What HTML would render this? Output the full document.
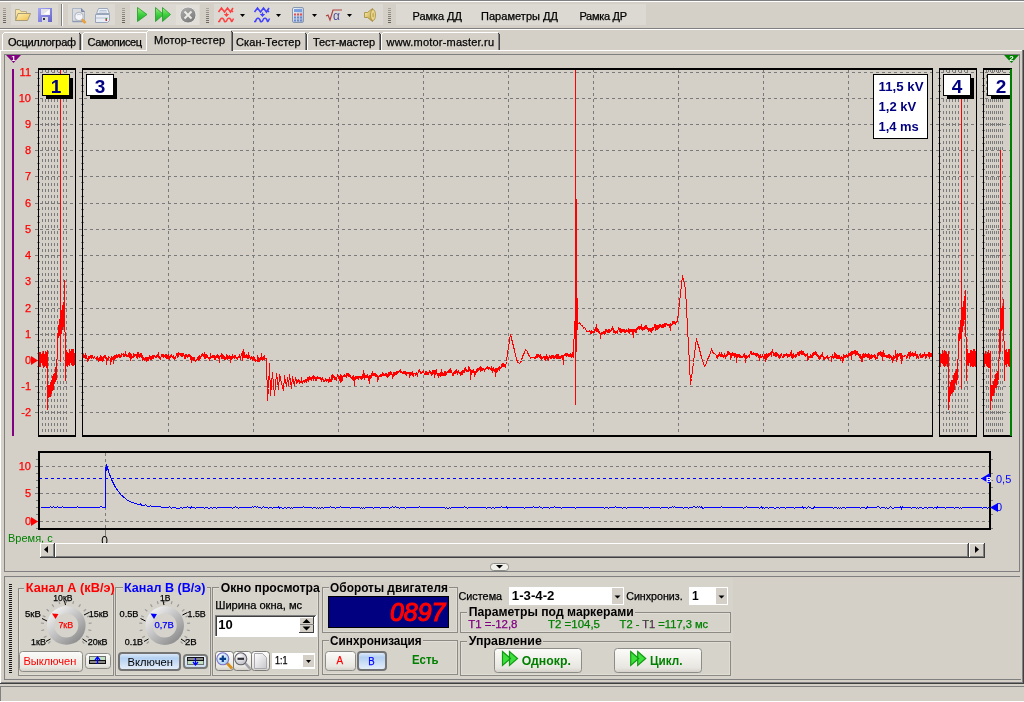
<!DOCTYPE html>
<html><head><meta charset="utf-8"><style>
html,body{margin:0;padding:0;}
body{width:1024px;height:702px;overflow:hidden;position:relative;background:#d4d0c8;font-family:"Liberation Sans", sans-serif;font-size:11px;}
svg{overflow:visible;will-change:transform}
</style></head><body>
<div style="position:absolute;left:0px;top:0px;width:1024px;height:1px;background:#808080;"></div><div style="position:absolute;left:0px;top:1px;width:1024px;height:1px;background:#fff;"></div><div style="position:absolute;left:0px;top:28px;width:1024px;height:1px;background:#808080;"></div><div style="position:absolute;left:0px;top:29px;width:1024px;height:1px;background:#fff;"></div><div style="position:absolute;left:11px;top:4px;width:47px;height:21px;background:#dcd9d2;"></div><div style="position:absolute;left:68px;top:4px;width:47px;height:21px;background:#dcd9d2;"></div><div style="position:absolute;left:130px;top:4px;width:70px;height:21px;background:#dcd9d2;"></div><div style="position:absolute;left:214px;top:4px;width:169px;height:21px;background:#dcd9d2;"></div><div style="position:absolute;left:396px;top:4px;width:250px;height:21px;background:#dcd9d2;"></div><div style="position:absolute;left:3px;top:8px;width:3px;height:1px;background:rgb(168,164,156);"></div><div style="position:absolute;left:3px;top:10px;width:3px;height:1px;background:rgb(158,154,146);"></div><div style="position:absolute;left:3px;top:12px;width:3px;height:1px;background:rgb(149,145,137);"></div><div style="position:absolute;left:3px;top:14px;width:3px;height:1px;background:rgb(140,136,128);"></div><div style="position:absolute;left:3px;top:16px;width:3px;height:1px;background:rgb(131,127,119);"></div><div style="position:absolute;left:3px;top:18px;width:3px;height:1px;background:rgb(122,118,110);"></div><div style="position:absolute;left:3px;top:20px;width:3px;height:1px;background:rgb(113,109,101);"></div><div style="position:absolute;left:3px;top:22px;width:3px;height:1px;background:rgb(104,100,92);"></div><div style="position:absolute;left:122px;top:8px;width:3px;height:1px;background:rgb(168,164,156);"></div><div style="position:absolute;left:122px;top:10px;width:3px;height:1px;background:rgb(158,154,146);"></div><div style="position:absolute;left:122px;top:12px;width:3px;height:1px;background:rgb(149,145,137);"></div><div style="position:absolute;left:122px;top:14px;width:3px;height:1px;background:rgb(140,136,128);"></div><div style="position:absolute;left:122px;top:16px;width:3px;height:1px;background:rgb(131,127,119);"></div><div style="position:absolute;left:122px;top:18px;width:3px;height:1px;background:rgb(122,118,110);"></div><div style="position:absolute;left:122px;top:20px;width:3px;height:1px;background:rgb(113,109,101);"></div><div style="position:absolute;left:122px;top:22px;width:3px;height:1px;background:rgb(104,100,92);"></div><div style="position:absolute;left:206px;top:8px;width:3px;height:1px;background:rgb(168,164,156);"></div><div style="position:absolute;left:206px;top:10px;width:3px;height:1px;background:rgb(158,154,146);"></div><div style="position:absolute;left:206px;top:12px;width:3px;height:1px;background:rgb(149,145,137);"></div><div style="position:absolute;left:206px;top:14px;width:3px;height:1px;background:rgb(140,136,128);"></div><div style="position:absolute;left:206px;top:16px;width:3px;height:1px;background:rgb(131,127,119);"></div><div style="position:absolute;left:206px;top:18px;width:3px;height:1px;background:rgb(122,118,110);"></div><div style="position:absolute;left:206px;top:20px;width:3px;height:1px;background:rgb(113,109,101);"></div><div style="position:absolute;left:206px;top:22px;width:3px;height:1px;background:rgb(104,100,92);"></div><div style="position:absolute;left:388px;top:8px;width:3px;height:1px;background:rgb(168,164,156);"></div><div style="position:absolute;left:388px;top:10px;width:3px;height:1px;background:rgb(158,154,146);"></div><div style="position:absolute;left:388px;top:12px;width:3px;height:1px;background:rgb(149,145,137);"></div><div style="position:absolute;left:388px;top:14px;width:3px;height:1px;background:rgb(140,136,128);"></div><div style="position:absolute;left:388px;top:16px;width:3px;height:1px;background:rgb(131,127,119);"></div><div style="position:absolute;left:388px;top:18px;width:3px;height:1px;background:rgb(122,118,110);"></div><div style="position:absolute;left:388px;top:20px;width:3px;height:1px;background:rgb(113,109,101);"></div><div style="position:absolute;left:388px;top:22px;width:3px;height:1px;background:rgb(104,100,92);"></div><div style="position:absolute;left:61px;top:4px;width:1px;height:22px;background:#808080;"></div><div style="position:absolute;left:62px;top:4px;width:1px;height:22px;background:#fff;"></div><svg style="position:absolute;left:14px;top:8px;" width="18" height="15" viewBox="0 0 18 15">
<defs><linearGradient id="fld" x1="0" y1="0" x2="1" y2="1"><stop offset="0" stop-color="#fff0b0"/><stop offset="1" stop-color="#f0c050"/></linearGradient></defs>
<path d="M1.5 1.5 L5.5 1.5 L7 3.5 L12.5 3.5 L12.5 12.5 L1.5 12.5 Z" fill="#f8e4a0" stroke="#b8ac88"/>
<path d="M4 5.5 L16.5 5.5 L13.5 12.5 L1.5 12.5 Z" fill="url(#fld)" stroke="#a89c78"/>
</svg><svg style="position:absolute;left:38px;top:8px;" width="14" height="14" viewBox="0 0 14 14">
<defs><linearGradient id="flp" x1="0" y1="0" x2="1" y2="1"><stop offset="0" stop-color="#a8a8f8"/><stop offset="1" stop-color="#6464c8"/></linearGradient></defs>
<rect x="0" y="0" width="14" height="14" fill="url(#flp)"/>
<rect x="3" y="1" width="9" height="6" fill="#e4e4e8"/>
<path d="M11.5 1.5 L11.5 6.5 L5 6.5 Z" fill="#ffffff"/>
<rect x="4" y="9" width="6" height="5" fill="#d8d8e0"/>
<rect x="5" y="10" width="2" height="2" fill="#303040"/>
</svg><svg style="position:absolute;left:71px;top:7px;" width="17" height="17" viewBox="0 0 17 17">
<path d="M1.5 1.5 L10.5 1.5 L13.5 4.5 L13.5 14.5 L1.5 14.5 Z" fill="#dcdcdc" stroke="#a8b4c8"/>
<path d="M1.5 14.5 L13.5 14.5" stroke="#8c9ab4" stroke-width="1.5"/>
<path d="M10.5 1.5 L10.5 4.5 L13.5 4.5" fill="#8c9ab8" stroke="#7a88a8"/>
<circle cx="8" cy="9.5" r="4.2" fill="#f4f6fb" stroke="#b8bcc8" stroke-width="1.2"/>
<path d="M6 8 Q8 6.5 10 8" stroke="#c8ccd8" fill="none"/>
<path d="M11 12.5 L14.5 16" stroke="#e8a040" stroke-width="2.6"/>
</svg><svg style="position:absolute;left:94px;top:7px;" width="17" height="17" viewBox="0 0 17 17">
<path d="M4.5 1.5 L13.5 1.5 L15.5 6.5 L2.5 6.5 Z" fill="#eef2f8" stroke="#9aa6ba"/>
<path d="M5.5 3.5 L12.5 3.5 M5 5 L13 5" stroke="#b8c4d8"/>
<path d="M1.5 7.5 L15.5 7.5 L15.5 13.5 L13.5 15.5 L1.5 15.5 Z" fill="#e8ecf4" stroke="#98a4b8"/>
<path d="M2 11 L14 11" stroke="#b0bccc"/>
<rect x="11.5" y="12" width="1.5" height="2" fill="#d03030"/>
<rect x="11.5" y="11" width="1.5" height="1" fill="#30a030"/>
</svg><svg style="position:absolute;left:136px;top:6px;" width="13" height="17" viewBox="0 0 13 17">
<defs><linearGradient id="gpl" x1="0" y1="0" x2="0" y2="1"><stop offset="0" stop-color="#a0f080"/><stop offset="0.5" stop-color="#40d040"/><stop offset="1" stop-color="#20a830"/></linearGradient></defs>
<path d="M1.5 1.5 L11 8.5 L1.5 15.5 Z" fill="url(#gpl)" stroke="#30a030" stroke-width="0.9"/>
</svg><svg style="position:absolute;left:154px;top:6px;" width="19" height="17" viewBox="0 0 19 17">
<path d="M1.5 1.5 L9.5 8.5 L1.5 15.5 Z" fill="url(#gpl)" stroke="#30a030" stroke-width="0.9"/>
<path d="M8.5 1.5 L16.5 8.5 L8.5 15.5 Z" fill="url(#gpl)" stroke="#30a030" stroke-width="0.9"/>
</svg><div style="position:absolute;left:176px;top:5px;width:23px;height:20px;background:#e2dfd9;"></div><svg style="position:absolute;left:179px;top:6px;" width="18" height="18" viewBox="0 0 18 18">
<defs><linearGradient id="stp" x1="0" y1="0" x2="0.6" y2="1"><stop offset="0" stop-color="#b0b0b0"/><stop offset="1" stop-color="#7c7c7c"/></linearGradient></defs>
<circle cx="9" cy="9" r="8" fill="url(#stp)" stroke="#f0f0ee" stroke-width="0.8"/>
<path d="M5.5 5.5 L12.5 12.5 M12.5 5.5 L5.5 12.5" stroke="#ecebe6" stroke-width="2"/>
</svg><svg style="position:absolute;left:217px;top:6px;" width="18" height="17" viewBox="0 0 18 17"><path d="M1.5 6 L4.5 2 L7.5 6 L10.5 2 L13.5 6 L16 2 M16 6 L15 5" fill="none" stroke="#ff4040" stroke-width="1.6"/>
<path d="M9.5 6.5 L9.5 9" stroke="#ff4040" stroke-width="1.3"/><path d="M6.8 8 L12.2 8 L9.5 11 Z" fill="#ff4040"/>
<path d="M1 15.5 L2.5 15.5 Q3.5 12 5 12.3 Q6.5 12 7.5 15.5 Q8.5 16 9.5 15 Q10.5 12 12 12.3 Q13.5 12 14.5 15.5 Q15 16 16.5 12.5" fill="none" stroke="#ff4040" stroke-width="1.5"/></svg><svg style="position:absolute;left:240px;top:14px;" width="5" height="3" viewBox="0 0 5 3"><path d="M0 0 L5 0 L2.5 3 Z" fill="#000"/></svg><svg style="position:absolute;left:253px;top:6px;" width="18" height="17" viewBox="0 0 18 17"><path d="M1.5 6 L4.5 2 L7.5 6 L10.5 2 L13.5 6 L16 2 M16 6 L15 5" fill="none" stroke="#4040ff" stroke-width="1.6"/>
<path d="M9.5 6.5 L9.5 9" stroke="#4040ff" stroke-width="1.3"/><path d="M6.8 8 L12.2 8 L9.5 11 Z" fill="#4040ff"/>
<path d="M1 15.5 L2.5 15.5 Q3.5 12 5 12.3 Q6.5 12 7.5 15.5 Q8.5 16 9.5 15 Q10.5 12 12 12.3 Q13.5 12 14.5 15.5 Q15 16 16.5 12.5" fill="none" stroke="#4040ff" stroke-width="1.5"/></svg><svg style="position:absolute;left:276px;top:14px;" width="5" height="3" viewBox="0 0 5 3"><path d="M0 0 L5 0 L2.5 3 Z" fill="#000"/></svg><svg style="position:absolute;left:292px;top:7px;" width="13" height="17" viewBox="0 0 13 17">
<defs><linearGradient id="clc" x1="0" y1="0" x2="1" y2="1"><stop offset="0" stop-color="#f4f6fa"/><stop offset="1" stop-color="#a8b4c8"/></linearGradient></defs>
<rect x="0.5" y="0.5" width="11" height="15" rx="1.5" fill="url(#clc)" stroke="#8898b0"/>
<rect x="2" y="2" width="8" height="3" fill="#7aa0e0"/>
<g fill="#e05050"><rect x="2" y="6.5" width="2" height="2"/><rect x="5" y="6.5" width="2" height="2"/><rect x="8" y="6.5" width="2" height="2"/></g>
<g fill="#6888d0"><rect x="2" y="9.5" width="2" height="2"/><rect x="5" y="9.5" width="2" height="2"/><rect x="8" y="9.5" width="2" height="2"/>
<rect x="2" y="12.5" width="2" height="2"/><rect x="5" y="12.5" width="2" height="2"/><rect x="8" y="12.5" width="2" height="2"/></g>
</svg><svg style="position:absolute;left:312px;top:14px;" width="5" height="3" viewBox="0 0 5 3"><path d="M0 0 L5 0 L2.5 3 Z" fill="#000"/></svg><svg style="position:absolute;left:325px;top:8px;" width="18" height="14" viewBox="0 0 18 14">
<path d="M1 8 L3 7 L5 12 L8 2 L17 2" fill="none" stroke="#b04040" stroke-width="1.2"/>
<text x="8" y="12" font-family="Liberation Sans" font-size="12" fill="#5050a0">&#945;</text>
</svg><svg style="position:absolute;left:347px;top:14px;" width="5" height="3" viewBox="0 0 5 3"><path d="M0 0 L5 0 L2.5 3 Z" fill="#000"/></svg><svg style="position:absolute;left:363px;top:7px;" width="14" height="16" viewBox="0 0 14 16">
<defs><linearGradient id="spk" x1="0" y1="0" x2="1" y2="1"><stop offset="0" stop-color="#fff4b8"/><stop offset="1" stop-color="#b89830"/></linearGradient></defs>
<path d="M1.5 5.5 L4.5 5.5 L9.5 1.5 L9.5 14.5 L4.5 10.5 L1.5 10.5 Z" fill="url(#spk)" stroke="#a08838" stroke-width="0.8"/>
<ellipse cx="10" cy="8" rx="2.5" ry="5.5" fill="#e8d890" stroke="#a89040" stroke-width="0.8"/>
<ellipse cx="10.2" cy="8" rx="1" ry="2.5" fill="#c8b060"/>
</svg><div style="position:absolute;left:2px;top:32px;width:79px;height:19px;background:#d4d0c8;"></div><div style="position:absolute;left:4px;top:32px;width:75px;height:1px;background:#fff;"></div><div style="position:absolute;left:2px;top:34px;width:1px;height:17px;background:#fff;"></div><div style="position:absolute;left:3px;top:33px;width:1px;height:1px;background:#fff;"></div><div style="position:absolute;left:80px;top:34px;width:1px;height:17px;background:#404040;"></div><div style="position:absolute;left:79px;top:33px;width:1px;height:18px;background:#808080;"></div><div style="position:absolute;left:79px;top:33px;width:1px;height:1px;background:#404040;"></div><div style="position:absolute;left:82px;top:32px;width:65px;height:19px;background:#d4d0c8;"></div><div style="position:absolute;left:84px;top:32px;width:61px;height:1px;background:#fff;"></div><div style="position:absolute;left:82px;top:34px;width:1px;height:17px;background:#fff;"></div><div style="position:absolute;left:83px;top:33px;width:1px;height:1px;background:#fff;"></div><div style="position:absolute;left:145px;top:32px;width:2px;height:1px;background:#fff;"></div><div style="position:absolute;left:232px;top:32px;width:75px;height:19px;background:#d4d0c8;"></div><div style="position:absolute;left:234px;top:32px;width:71px;height:1px;background:#fff;"></div><div style="position:absolute;left:232px;top:32px;width:2px;height:1px;background:#fff;"></div><div style="position:absolute;left:306px;top:34px;width:1px;height:17px;background:#404040;"></div><div style="position:absolute;left:305px;top:33px;width:1px;height:18px;background:#808080;"></div><div style="position:absolute;left:305px;top:33px;width:1px;height:1px;background:#404040;"></div><div style="position:absolute;left:307px;top:32px;width:74px;height:19px;background:#d4d0c8;"></div><div style="position:absolute;left:309px;top:32px;width:70px;height:1px;background:#fff;"></div><div style="position:absolute;left:307px;top:34px;width:1px;height:17px;background:#fff;"></div><div style="position:absolute;left:308px;top:33px;width:1px;height:1px;background:#fff;"></div><div style="position:absolute;left:380px;top:34px;width:1px;height:17px;background:#404040;"></div><div style="position:absolute;left:379px;top:33px;width:1px;height:18px;background:#808080;"></div><div style="position:absolute;left:379px;top:33px;width:1px;height:1px;background:#404040;"></div><div style="position:absolute;left:381px;top:32px;width:119px;height:19px;background:#d4d0c8;"></div><div style="position:absolute;left:383px;top:32px;width:115px;height:1px;background:#fff;"></div><div style="position:absolute;left:381px;top:34px;width:1px;height:17px;background:#fff;"></div><div style="position:absolute;left:382px;top:33px;width:1px;height:1px;background:#fff;"></div><div style="position:absolute;left:499px;top:34px;width:1px;height:17px;background:#404040;"></div><div style="position:absolute;left:498px;top:33px;width:1px;height:18px;background:#808080;"></div><div style="position:absolute;left:498px;top:33px;width:1px;height:1px;background:#404040;"></div><div style="position:absolute;left:0px;top:50px;width:1023px;height:1px;background:#fff;"></div><div style="position:absolute;left:0px;top:50px;width:1px;height:633px;background:#fff;"></div><div style="position:absolute;left:1022px;top:50px;width:1px;height:633px;background:#808080;"></div><div style="position:absolute;left:1023px;top:50px;width:1px;height:634px;background:#404040;"></div><div style="position:absolute;left:1px;top:682px;width:1022px;height:1px;background:#808080;"></div><div style="position:absolute;left:0px;top:683px;width:1024px;height:1px;background:#404040;"></div><div style="position:absolute;left:146px;top:30px;width:87px;height:21px;background:#d4d0c8;"></div><div style="position:absolute;left:148px;top:30px;width:83px;height:1px;background:#fff;"></div><div style="position:absolute;left:146px;top:32px;width:1px;height:19px;background:#fff;"></div><div style="position:absolute;left:147px;top:31px;width:1px;height:1px;background:#fff;"></div><div style="position:absolute;left:232px;top:32px;width:1px;height:19px;background:#404040;"></div><div style="position:absolute;left:231px;top:31px;width:1px;height:20px;background:#808080;"></div><div style="position:absolute;left:231px;top:31px;width:1px;height:1px;background:#404040;"></div><div style="position:absolute;left:147px;top:50px;width:84px;height:1px;background:#d4d0c8;"></div><div style="position:absolute;left:4px;top:54px;width:1016px;height:1px;background:#808080;"></div><div style="position:absolute;left:4px;top:54px;width:1px;height:518px;background:#808080;"></div><div style="position:absolute;left:4px;top:571px;width:1016px;height:1px;background:#808080;"></div><div style="position:absolute;left:1019px;top:54px;width:1px;height:518px;background:#808080;"></div><div style="position:absolute;left:4px;top:576px;width:1016px;height:1px;background:#808080;"></div><div style="position:absolute;left:4px;top:576px;width:1px;height:104px;background:#808080;"></div><div style="position:absolute;left:4px;top:679px;width:1017px;height:1px;background:#808080;"></div><div style="position:absolute;left:0px;top:686px;width:1024px;height:1px;background:#808080;"></div><div style="position:absolute;left:0px;top:686px;width:1px;height:15px;background:#808080;"></div><div style="position:absolute;left:0px;top:701px;width:1024px;height:1px;background:#fff;"></div><svg style="position:absolute;left:0;top:0" width="1024" height="702" viewBox="0 0 1024 702" shape-rendering="crispEdges"><line x1="40" y1="72.5" x2="75" y2="72.5" stroke="#7a7a7a" stroke-dasharray="3 3"/><line x1="35" y1="72.5" x2="38" y2="72.5" stroke="#7a7a7a"/><line x1="40" y1="98.5" x2="75" y2="98.5" stroke="#7a7a7a" stroke-dasharray="3 3"/><line x1="35" y1="98.5" x2="38" y2="98.5" stroke="#7a7a7a"/><line x1="40" y1="124.5" x2="75" y2="124.5" stroke="#7a7a7a" stroke-dasharray="3 3"/><line x1="35" y1="124.5" x2="38" y2="124.5" stroke="#7a7a7a"/><line x1="40" y1="150.5" x2="75" y2="150.5" stroke="#7a7a7a" stroke-dasharray="3 3"/><line x1="35" y1="150.5" x2="38" y2="150.5" stroke="#7a7a7a"/><line x1="40" y1="176.5" x2="75" y2="176.5" stroke="#7a7a7a" stroke-dasharray="3 3"/><line x1="35" y1="176.5" x2="38" y2="176.5" stroke="#7a7a7a"/><line x1="40" y1="203.5" x2="75" y2="203.5" stroke="#7a7a7a" stroke-dasharray="3 3"/><line x1="35" y1="203.5" x2="38" y2="203.5" stroke="#7a7a7a"/><line x1="40" y1="229.5" x2="75" y2="229.5" stroke="#7a7a7a" stroke-dasharray="3 3"/><line x1="35" y1="229.5" x2="38" y2="229.5" stroke="#7a7a7a"/><line x1="40" y1="255.5" x2="75" y2="255.5" stroke="#7a7a7a" stroke-dasharray="3 3"/><line x1="35" y1="255.5" x2="38" y2="255.5" stroke="#7a7a7a"/><line x1="40" y1="281.5" x2="75" y2="281.5" stroke="#7a7a7a" stroke-dasharray="3 3"/><line x1="35" y1="281.5" x2="38" y2="281.5" stroke="#7a7a7a"/><line x1="40" y1="308.5" x2="75" y2="308.5" stroke="#7a7a7a" stroke-dasharray="3 3"/><line x1="35" y1="308.5" x2="38" y2="308.5" stroke="#7a7a7a"/><line x1="40" y1="334.5" x2="75" y2="334.5" stroke="#7a7a7a" stroke-dasharray="3 3"/><line x1="35" y1="334.5" x2="38" y2="334.5" stroke="#7a7a7a"/><line x1="40" y1="360.5" x2="75" y2="360.5" stroke="#7a7a7a" stroke-dasharray="3 3"/><line x1="35" y1="360.5" x2="38" y2="360.5" stroke="#7a7a7a"/><line x1="40" y1="386.5" x2="75" y2="386.5" stroke="#7a7a7a" stroke-dasharray="3 3"/><line x1="35" y1="386.5" x2="38" y2="386.5" stroke="#7a7a7a"/><line x1="40" y1="412.5" x2="75" y2="412.5" stroke="#7a7a7a" stroke-dasharray="3 3"/><line x1="35" y1="412.5" x2="38" y2="412.5" stroke="#7a7a7a"/><line x1="42.5" y1="69" x2="42.5" y2="435" stroke="#7a7a7a" stroke-dasharray="3 3"/><line x1="45.5" y1="69" x2="45.5" y2="435" stroke="#7a7a7a" stroke-dasharray="3 3"/><line x1="48.5" y1="69" x2="48.5" y2="435" stroke="#7a7a7a" stroke-dasharray="3 3"/><line x1="51.5" y1="69" x2="51.5" y2="435" stroke="#7a7a7a" stroke-dasharray="3 3"/><line x1="54.5" y1="69" x2="54.5" y2="435" stroke="#7a7a7a" stroke-dasharray="3 3"/><line x1="57.5" y1="69" x2="57.5" y2="435" stroke="#7a7a7a" stroke-dasharray="3 3"/><line x1="60.5" y1="69" x2="60.5" y2="435" stroke="#7a7a7a" stroke-dasharray="3 3"/><line x1="63.5" y1="69" x2="63.5" y2="435" stroke="#7a7a7a" stroke-dasharray="3 3"/><line x1="66.5" y1="69" x2="66.5" y2="435" stroke="#7a7a7a" stroke-dasharray="3 3"/><line x1="37" y1="78.5" x2="40" y2="78.5" stroke="#7a7a7a"/><line x1="37" y1="85.5" x2="40" y2="85.5" stroke="#7a7a7a"/><line x1="37" y1="91.5" x2="40" y2="91.5" stroke="#7a7a7a"/><line x1="37" y1="104.5" x2="40" y2="104.5" stroke="#7a7a7a"/><line x1="37" y1="111.5" x2="40" y2="111.5" stroke="#7a7a7a"/><line x1="37" y1="117.5" x2="40" y2="117.5" stroke="#7a7a7a"/><line x1="37" y1="130.5" x2="40" y2="130.5" stroke="#7a7a7a"/><line x1="37" y1="137.5" x2="40" y2="137.5" stroke="#7a7a7a"/><line x1="37" y1="143.5" x2="40" y2="143.5" stroke="#7a7a7a"/><line x1="37" y1="156.5" x2="40" y2="156.5" stroke="#7a7a7a"/><line x1="37" y1="163.5" x2="40" y2="163.5" stroke="#7a7a7a"/><line x1="37" y1="169.5" x2="40" y2="169.5" stroke="#7a7a7a"/><line x1="37" y1="182.5" x2="40" y2="182.5" stroke="#7a7a7a"/><line x1="37" y1="189.5" x2="40" y2="189.5" stroke="#7a7a7a"/><line x1="37" y1="196.5" x2="40" y2="196.5" stroke="#7a7a7a"/><line x1="37" y1="209.5" x2="40" y2="209.5" stroke="#7a7a7a"/><line x1="37" y1="216.5" x2="40" y2="216.5" stroke="#7a7a7a"/><line x1="37" y1="222.5" x2="40" y2="222.5" stroke="#7a7a7a"/><line x1="37" y1="235.5" x2="40" y2="235.5" stroke="#7a7a7a"/><line x1="37" y1="242.5" x2="40" y2="242.5" stroke="#7a7a7a"/><line x1="37" y1="248.5" x2="40" y2="248.5" stroke="#7a7a7a"/><line x1="37" y1="261.5" x2="40" y2="261.5" stroke="#7a7a7a"/><line x1="37" y1="268.5" x2="40" y2="268.5" stroke="#7a7a7a"/><line x1="37" y1="274.5" x2="40" y2="274.5" stroke="#7a7a7a"/><line x1="37" y1="287.5" x2="40" y2="287.5" stroke="#7a7a7a"/><line x1="37" y1="294.5" x2="40" y2="294.5" stroke="#7a7a7a"/><line x1="37" y1="301.5" x2="40" y2="301.5" stroke="#7a7a7a"/><line x1="37" y1="314.5" x2="40" y2="314.5" stroke="#7a7a7a"/><line x1="37" y1="321.5" x2="40" y2="321.5" stroke="#7a7a7a"/><line x1="37" y1="327.5" x2="40" y2="327.5" stroke="#7a7a7a"/><line x1="37" y1="340.5" x2="40" y2="340.5" stroke="#7a7a7a"/><line x1="37" y1="347.5" x2="40" y2="347.5" stroke="#7a7a7a"/><line x1="37" y1="353.5" x2="40" y2="353.5" stroke="#7a7a7a"/><line x1="37" y1="366.5" x2="40" y2="366.5" stroke="#7a7a7a"/><line x1="37" y1="373.5" x2="40" y2="373.5" stroke="#7a7a7a"/><line x1="37" y1="379.5" x2="40" y2="379.5" stroke="#7a7a7a"/><line x1="37" y1="392.5" x2="40" y2="392.5" stroke="#7a7a7a"/><line x1="37" y1="399.5" x2="40" y2="399.5" stroke="#7a7a7a"/><line x1="37" y1="405.5" x2="40" y2="405.5" stroke="#7a7a7a"/><line x1="84" y1="72.5" x2="932" y2="72.5" stroke="#7a7a7a" stroke-dasharray="3 3"/><line x1="79" y1="72.5" x2="82" y2="72.5" stroke="#7a7a7a"/><line x1="84" y1="98.5" x2="932" y2="98.5" stroke="#7a7a7a" stroke-dasharray="3 3"/><line x1="79" y1="98.5" x2="82" y2="98.5" stroke="#7a7a7a"/><line x1="84" y1="124.5" x2="932" y2="124.5" stroke="#7a7a7a" stroke-dasharray="3 3"/><line x1="79" y1="124.5" x2="82" y2="124.5" stroke="#7a7a7a"/><line x1="84" y1="150.5" x2="932" y2="150.5" stroke="#7a7a7a" stroke-dasharray="3 3"/><line x1="79" y1="150.5" x2="82" y2="150.5" stroke="#7a7a7a"/><line x1="84" y1="176.5" x2="932" y2="176.5" stroke="#7a7a7a" stroke-dasharray="3 3"/><line x1="79" y1="176.5" x2="82" y2="176.5" stroke="#7a7a7a"/><line x1="84" y1="203.5" x2="932" y2="203.5" stroke="#7a7a7a" stroke-dasharray="3 3"/><line x1="79" y1="203.5" x2="82" y2="203.5" stroke="#7a7a7a"/><line x1="84" y1="229.5" x2="932" y2="229.5" stroke="#7a7a7a" stroke-dasharray="3 3"/><line x1="79" y1="229.5" x2="82" y2="229.5" stroke="#7a7a7a"/><line x1="84" y1="255.5" x2="932" y2="255.5" stroke="#7a7a7a" stroke-dasharray="3 3"/><line x1="79" y1="255.5" x2="82" y2="255.5" stroke="#7a7a7a"/><line x1="84" y1="281.5" x2="932" y2="281.5" stroke="#7a7a7a" stroke-dasharray="3 3"/><line x1="79" y1="281.5" x2="82" y2="281.5" stroke="#7a7a7a"/><line x1="84" y1="308.5" x2="932" y2="308.5" stroke="#7a7a7a" stroke-dasharray="3 3"/><line x1="79" y1="308.5" x2="82" y2="308.5" stroke="#7a7a7a"/><line x1="84" y1="334.5" x2="932" y2="334.5" stroke="#7a7a7a" stroke-dasharray="3 3"/><line x1="79" y1="334.5" x2="82" y2="334.5" stroke="#7a7a7a"/><line x1="84" y1="360.5" x2="932" y2="360.5" stroke="#7a7a7a" stroke-dasharray="3 3"/><line x1="79" y1="360.5" x2="82" y2="360.5" stroke="#7a7a7a"/><line x1="84" y1="386.5" x2="932" y2="386.5" stroke="#7a7a7a" stroke-dasharray="3 3"/><line x1="79" y1="386.5" x2="82" y2="386.5" stroke="#7a7a7a"/><line x1="84" y1="412.5" x2="932" y2="412.5" stroke="#7a7a7a" stroke-dasharray="3 3"/><line x1="79" y1="412.5" x2="82" y2="412.5" stroke="#7a7a7a"/><line x1="168.5" y1="69" x2="168.5" y2="435" stroke="#7a7a7a" stroke-dasharray="3 3"/><line x1="253.5" y1="69" x2="253.5" y2="435" stroke="#7a7a7a" stroke-dasharray="3 3"/><line x1="338.5" y1="69" x2="338.5" y2="435" stroke="#7a7a7a" stroke-dasharray="3 3"/><line x1="423.5" y1="69" x2="423.5" y2="435" stroke="#7a7a7a" stroke-dasharray="3 3"/><line x1="508.5" y1="69" x2="508.5" y2="435" stroke="#7a7a7a" stroke-dasharray="3 3"/><line x1="593.5" y1="69" x2="593.5" y2="435" stroke="#7a7a7a" stroke-dasharray="3 3"/><line x1="678.5" y1="69" x2="678.5" y2="435" stroke="#7a7a7a" stroke-dasharray="3 3"/><line x1="763.5" y1="69" x2="763.5" y2="435" stroke="#7a7a7a" stroke-dasharray="3 3"/><line x1="848.5" y1="69" x2="848.5" y2="435" stroke="#7a7a7a" stroke-dasharray="3 3"/><line x1="81" y1="78.5" x2="84" y2="78.5" stroke="#7a7a7a"/><line x1="81" y1="85.5" x2="84" y2="85.5" stroke="#7a7a7a"/><line x1="81" y1="91.5" x2="84" y2="91.5" stroke="#7a7a7a"/><line x1="81" y1="104.5" x2="84" y2="104.5" stroke="#7a7a7a"/><line x1="81" y1="111.5" x2="84" y2="111.5" stroke="#7a7a7a"/><line x1="81" y1="117.5" x2="84" y2="117.5" stroke="#7a7a7a"/><line x1="81" y1="130.5" x2="84" y2="130.5" stroke="#7a7a7a"/><line x1="81" y1="137.5" x2="84" y2="137.5" stroke="#7a7a7a"/><line x1="81" y1="143.5" x2="84" y2="143.5" stroke="#7a7a7a"/><line x1="81" y1="156.5" x2="84" y2="156.5" stroke="#7a7a7a"/><line x1="81" y1="163.5" x2="84" y2="163.5" stroke="#7a7a7a"/><line x1="81" y1="169.5" x2="84" y2="169.5" stroke="#7a7a7a"/><line x1="81" y1="182.5" x2="84" y2="182.5" stroke="#7a7a7a"/><line x1="81" y1="189.5" x2="84" y2="189.5" stroke="#7a7a7a"/><line x1="81" y1="196.5" x2="84" y2="196.5" stroke="#7a7a7a"/><line x1="81" y1="209.5" x2="84" y2="209.5" stroke="#7a7a7a"/><line x1="81" y1="216.5" x2="84" y2="216.5" stroke="#7a7a7a"/><line x1="81" y1="222.5" x2="84" y2="222.5" stroke="#7a7a7a"/><line x1="81" y1="235.5" x2="84" y2="235.5" stroke="#7a7a7a"/><line x1="81" y1="242.5" x2="84" y2="242.5" stroke="#7a7a7a"/><line x1="81" y1="248.5" x2="84" y2="248.5" stroke="#7a7a7a"/><line x1="81" y1="261.5" x2="84" y2="261.5" stroke="#7a7a7a"/><line x1="81" y1="268.5" x2="84" y2="268.5" stroke="#7a7a7a"/><line x1="81" y1="274.5" x2="84" y2="274.5" stroke="#7a7a7a"/><line x1="81" y1="287.5" x2="84" y2="287.5" stroke="#7a7a7a"/><line x1="81" y1="294.5" x2="84" y2="294.5" stroke="#7a7a7a"/><line x1="81" y1="301.5" x2="84" y2="301.5" stroke="#7a7a7a"/><line x1="81" y1="314.5" x2="84" y2="314.5" stroke="#7a7a7a"/><line x1="81" y1="321.5" x2="84" y2="321.5" stroke="#7a7a7a"/><line x1="81" y1="327.5" x2="84" y2="327.5" stroke="#7a7a7a"/><line x1="81" y1="340.5" x2="84" y2="340.5" stroke="#7a7a7a"/><line x1="81" y1="347.5" x2="84" y2="347.5" stroke="#7a7a7a"/><line x1="81" y1="353.5" x2="84" y2="353.5" stroke="#7a7a7a"/><line x1="81" y1="366.5" x2="84" y2="366.5" stroke="#7a7a7a"/><line x1="81" y1="373.5" x2="84" y2="373.5" stroke="#7a7a7a"/><line x1="81" y1="379.5" x2="84" y2="379.5" stroke="#7a7a7a"/><line x1="81" y1="392.5" x2="84" y2="392.5" stroke="#7a7a7a"/><line x1="81" y1="399.5" x2="84" y2="399.5" stroke="#7a7a7a"/><line x1="81" y1="405.5" x2="84" y2="405.5" stroke="#7a7a7a"/><line x1="941" y1="72.5" x2="976" y2="72.5" stroke="#7a7a7a" stroke-dasharray="3 3"/><line x1="936" y1="72.5" x2="939" y2="72.5" stroke="#7a7a7a"/><line x1="941" y1="98.5" x2="976" y2="98.5" stroke="#7a7a7a" stroke-dasharray="3 3"/><line x1="936" y1="98.5" x2="939" y2="98.5" stroke="#7a7a7a"/><line x1="941" y1="124.5" x2="976" y2="124.5" stroke="#7a7a7a" stroke-dasharray="3 3"/><line x1="936" y1="124.5" x2="939" y2="124.5" stroke="#7a7a7a"/><line x1="941" y1="150.5" x2="976" y2="150.5" stroke="#7a7a7a" stroke-dasharray="3 3"/><line x1="936" y1="150.5" x2="939" y2="150.5" stroke="#7a7a7a"/><line x1="941" y1="176.5" x2="976" y2="176.5" stroke="#7a7a7a" stroke-dasharray="3 3"/><line x1="936" y1="176.5" x2="939" y2="176.5" stroke="#7a7a7a"/><line x1="941" y1="203.5" x2="976" y2="203.5" stroke="#7a7a7a" stroke-dasharray="3 3"/><line x1="936" y1="203.5" x2="939" y2="203.5" stroke="#7a7a7a"/><line x1="941" y1="229.5" x2="976" y2="229.5" stroke="#7a7a7a" stroke-dasharray="3 3"/><line x1="936" y1="229.5" x2="939" y2="229.5" stroke="#7a7a7a"/><line x1="941" y1="255.5" x2="976" y2="255.5" stroke="#7a7a7a" stroke-dasharray="3 3"/><line x1="936" y1="255.5" x2="939" y2="255.5" stroke="#7a7a7a"/><line x1="941" y1="281.5" x2="976" y2="281.5" stroke="#7a7a7a" stroke-dasharray="3 3"/><line x1="936" y1="281.5" x2="939" y2="281.5" stroke="#7a7a7a"/><line x1="941" y1="308.5" x2="976" y2="308.5" stroke="#7a7a7a" stroke-dasharray="3 3"/><line x1="936" y1="308.5" x2="939" y2="308.5" stroke="#7a7a7a"/><line x1="941" y1="334.5" x2="976" y2="334.5" stroke="#7a7a7a" stroke-dasharray="3 3"/><line x1="936" y1="334.5" x2="939" y2="334.5" stroke="#7a7a7a"/><line x1="941" y1="360.5" x2="976" y2="360.5" stroke="#7a7a7a" stroke-dasharray="3 3"/><line x1="936" y1="360.5" x2="939" y2="360.5" stroke="#7a7a7a"/><line x1="941" y1="386.5" x2="976" y2="386.5" stroke="#7a7a7a" stroke-dasharray="3 3"/><line x1="936" y1="386.5" x2="939" y2="386.5" stroke="#7a7a7a"/><line x1="941" y1="412.5" x2="976" y2="412.5" stroke="#7a7a7a" stroke-dasharray="3 3"/><line x1="936" y1="412.5" x2="939" y2="412.5" stroke="#7a7a7a"/><line x1="943.5" y1="69" x2="943.5" y2="435" stroke="#7a7a7a" stroke-dasharray="3 3"/><line x1="946.5" y1="69" x2="946.5" y2="435" stroke="#7a7a7a" stroke-dasharray="3 3"/><line x1="949.5" y1="69" x2="949.5" y2="435" stroke="#7a7a7a" stroke-dasharray="3 3"/><line x1="952.5" y1="69" x2="952.5" y2="435" stroke="#7a7a7a" stroke-dasharray="3 3"/><line x1="955.5" y1="69" x2="955.5" y2="435" stroke="#7a7a7a" stroke-dasharray="3 3"/><line x1="958.5" y1="69" x2="958.5" y2="435" stroke="#7a7a7a" stroke-dasharray="3 3"/><line x1="961.5" y1="69" x2="961.5" y2="435" stroke="#7a7a7a" stroke-dasharray="3 3"/><line x1="964.5" y1="69" x2="964.5" y2="435" stroke="#7a7a7a" stroke-dasharray="3 3"/><line x1="967.5" y1="69" x2="967.5" y2="435" stroke="#7a7a7a" stroke-dasharray="3 3"/><line x1="938" y1="78.5" x2="941" y2="78.5" stroke="#7a7a7a"/><line x1="938" y1="85.5" x2="941" y2="85.5" stroke="#7a7a7a"/><line x1="938" y1="91.5" x2="941" y2="91.5" stroke="#7a7a7a"/><line x1="938" y1="104.5" x2="941" y2="104.5" stroke="#7a7a7a"/><line x1="938" y1="111.5" x2="941" y2="111.5" stroke="#7a7a7a"/><line x1="938" y1="117.5" x2="941" y2="117.5" stroke="#7a7a7a"/><line x1="938" y1="130.5" x2="941" y2="130.5" stroke="#7a7a7a"/><line x1="938" y1="137.5" x2="941" y2="137.5" stroke="#7a7a7a"/><line x1="938" y1="143.5" x2="941" y2="143.5" stroke="#7a7a7a"/><line x1="938" y1="156.5" x2="941" y2="156.5" stroke="#7a7a7a"/><line x1="938" y1="163.5" x2="941" y2="163.5" stroke="#7a7a7a"/><line x1="938" y1="169.5" x2="941" y2="169.5" stroke="#7a7a7a"/><line x1="938" y1="182.5" x2="941" y2="182.5" stroke="#7a7a7a"/><line x1="938" y1="189.5" x2="941" y2="189.5" stroke="#7a7a7a"/><line x1="938" y1="196.5" x2="941" y2="196.5" stroke="#7a7a7a"/><line x1="938" y1="209.5" x2="941" y2="209.5" stroke="#7a7a7a"/><line x1="938" y1="216.5" x2="941" y2="216.5" stroke="#7a7a7a"/><line x1="938" y1="222.5" x2="941" y2="222.5" stroke="#7a7a7a"/><line x1="938" y1="235.5" x2="941" y2="235.5" stroke="#7a7a7a"/><line x1="938" y1="242.5" x2="941" y2="242.5" stroke="#7a7a7a"/><line x1="938" y1="248.5" x2="941" y2="248.5" stroke="#7a7a7a"/><line x1="938" y1="261.5" x2="941" y2="261.5" stroke="#7a7a7a"/><line x1="938" y1="268.5" x2="941" y2="268.5" stroke="#7a7a7a"/><line x1="938" y1="274.5" x2="941" y2="274.5" stroke="#7a7a7a"/><line x1="938" y1="287.5" x2="941" y2="287.5" stroke="#7a7a7a"/><line x1="938" y1="294.5" x2="941" y2="294.5" stroke="#7a7a7a"/><line x1="938" y1="301.5" x2="941" y2="301.5" stroke="#7a7a7a"/><line x1="938" y1="314.5" x2="941" y2="314.5" stroke="#7a7a7a"/><line x1="938" y1="321.5" x2="941" y2="321.5" stroke="#7a7a7a"/><line x1="938" y1="327.5" x2="941" y2="327.5" stroke="#7a7a7a"/><line x1="938" y1="340.5" x2="941" y2="340.5" stroke="#7a7a7a"/><line x1="938" y1="347.5" x2="941" y2="347.5" stroke="#7a7a7a"/><line x1="938" y1="353.5" x2="941" y2="353.5" stroke="#7a7a7a"/><line x1="938" y1="366.5" x2="941" y2="366.5" stroke="#7a7a7a"/><line x1="938" y1="373.5" x2="941" y2="373.5" stroke="#7a7a7a"/><line x1="938" y1="379.5" x2="941" y2="379.5" stroke="#7a7a7a"/><line x1="938" y1="392.5" x2="941" y2="392.5" stroke="#7a7a7a"/><line x1="938" y1="399.5" x2="941" y2="399.5" stroke="#7a7a7a"/><line x1="938" y1="405.5" x2="941" y2="405.5" stroke="#7a7a7a"/><line x1="985" y1="72.5" x2="1011" y2="72.5" stroke="#7a7a7a" stroke-dasharray="3 3"/><line x1="980" y1="72.5" x2="983" y2="72.5" stroke="#7a7a7a"/><line x1="985" y1="98.5" x2="1011" y2="98.5" stroke="#7a7a7a" stroke-dasharray="3 3"/><line x1="980" y1="98.5" x2="983" y2="98.5" stroke="#7a7a7a"/><line x1="985" y1="124.5" x2="1011" y2="124.5" stroke="#7a7a7a" stroke-dasharray="3 3"/><line x1="980" y1="124.5" x2="983" y2="124.5" stroke="#7a7a7a"/><line x1="985" y1="150.5" x2="1011" y2="150.5" stroke="#7a7a7a" stroke-dasharray="3 3"/><line x1="980" y1="150.5" x2="983" y2="150.5" stroke="#7a7a7a"/><line x1="985" y1="176.5" x2="1011" y2="176.5" stroke="#7a7a7a" stroke-dasharray="3 3"/><line x1="980" y1="176.5" x2="983" y2="176.5" stroke="#7a7a7a"/><line x1="985" y1="203.5" x2="1011" y2="203.5" stroke="#7a7a7a" stroke-dasharray="3 3"/><line x1="980" y1="203.5" x2="983" y2="203.5" stroke="#7a7a7a"/><line x1="985" y1="229.5" x2="1011" y2="229.5" stroke="#7a7a7a" stroke-dasharray="3 3"/><line x1="980" y1="229.5" x2="983" y2="229.5" stroke="#7a7a7a"/><line x1="985" y1="255.5" x2="1011" y2="255.5" stroke="#7a7a7a" stroke-dasharray="3 3"/><line x1="980" y1="255.5" x2="983" y2="255.5" stroke="#7a7a7a"/><line x1="985" y1="281.5" x2="1011" y2="281.5" stroke="#7a7a7a" stroke-dasharray="3 3"/><line x1="980" y1="281.5" x2="983" y2="281.5" stroke="#7a7a7a"/><line x1="985" y1="308.5" x2="1011" y2="308.5" stroke="#7a7a7a" stroke-dasharray="3 3"/><line x1="980" y1="308.5" x2="983" y2="308.5" stroke="#7a7a7a"/><line x1="985" y1="334.5" x2="1011" y2="334.5" stroke="#7a7a7a" stroke-dasharray="3 3"/><line x1="980" y1="334.5" x2="983" y2="334.5" stroke="#7a7a7a"/><line x1="985" y1="360.5" x2="1011" y2="360.5" stroke="#7a7a7a" stroke-dasharray="3 3"/><line x1="980" y1="360.5" x2="983" y2="360.5" stroke="#7a7a7a"/><line x1="985" y1="386.5" x2="1011" y2="386.5" stroke="#7a7a7a" stroke-dasharray="3 3"/><line x1="980" y1="386.5" x2="983" y2="386.5" stroke="#7a7a7a"/><line x1="985" y1="412.5" x2="1011" y2="412.5" stroke="#7a7a7a" stroke-dasharray="3 3"/><line x1="980" y1="412.5" x2="983" y2="412.5" stroke="#7a7a7a"/><line x1="986.5" y1="69" x2="986.5" y2="435" stroke="#7a7a7a" stroke-dasharray="3 3"/><line x1="988.5" y1="69" x2="988.5" y2="435" stroke="#7a7a7a" stroke-dasharray="3 3"/><line x1="990.5" y1="69" x2="990.5" y2="435" stroke="#7a7a7a" stroke-dasharray="3 3"/><line x1="992.5" y1="69" x2="992.5" y2="435" stroke="#7a7a7a" stroke-dasharray="3 3"/><line x1="994.5" y1="69" x2="994.5" y2="435" stroke="#7a7a7a" stroke-dasharray="3 3"/><line x1="996.5" y1="69" x2="996.5" y2="435" stroke="#7a7a7a" stroke-dasharray="3 3"/><line x1="998.5" y1="69" x2="998.5" y2="435" stroke="#7a7a7a" stroke-dasharray="3 3"/><line x1="1000.5" y1="69" x2="1000.5" y2="435" stroke="#7a7a7a" stroke-dasharray="3 3"/><line x1="1002.5" y1="69" x2="1002.5" y2="435" stroke="#7a7a7a" stroke-dasharray="3 3"/><line x1="982" y1="78.5" x2="985" y2="78.5" stroke="#7a7a7a"/><line x1="982" y1="85.5" x2="985" y2="85.5" stroke="#7a7a7a"/><line x1="982" y1="91.5" x2="985" y2="91.5" stroke="#7a7a7a"/><line x1="982" y1="104.5" x2="985" y2="104.5" stroke="#7a7a7a"/><line x1="982" y1="111.5" x2="985" y2="111.5" stroke="#7a7a7a"/><line x1="982" y1="117.5" x2="985" y2="117.5" stroke="#7a7a7a"/><line x1="982" y1="130.5" x2="985" y2="130.5" stroke="#7a7a7a"/><line x1="982" y1="137.5" x2="985" y2="137.5" stroke="#7a7a7a"/><line x1="982" y1="143.5" x2="985" y2="143.5" stroke="#7a7a7a"/><line x1="982" y1="156.5" x2="985" y2="156.5" stroke="#7a7a7a"/><line x1="982" y1="163.5" x2="985" y2="163.5" stroke="#7a7a7a"/><line x1="982" y1="169.5" x2="985" y2="169.5" stroke="#7a7a7a"/><line x1="982" y1="182.5" x2="985" y2="182.5" stroke="#7a7a7a"/><line x1="982" y1="189.5" x2="985" y2="189.5" stroke="#7a7a7a"/><line x1="982" y1="196.5" x2="985" y2="196.5" stroke="#7a7a7a"/><line x1="982" y1="209.5" x2="985" y2="209.5" stroke="#7a7a7a"/><line x1="982" y1="216.5" x2="985" y2="216.5" stroke="#7a7a7a"/><line x1="982" y1="222.5" x2="985" y2="222.5" stroke="#7a7a7a"/><line x1="982" y1="235.5" x2="985" y2="235.5" stroke="#7a7a7a"/><line x1="982" y1="242.5" x2="985" y2="242.5" stroke="#7a7a7a"/><line x1="982" y1="248.5" x2="985" y2="248.5" stroke="#7a7a7a"/><line x1="982" y1="261.5" x2="985" y2="261.5" stroke="#7a7a7a"/><line x1="982" y1="268.5" x2="985" y2="268.5" stroke="#7a7a7a"/><line x1="982" y1="274.5" x2="985" y2="274.5" stroke="#7a7a7a"/><line x1="982" y1="287.5" x2="985" y2="287.5" stroke="#7a7a7a"/><line x1="982" y1="294.5" x2="985" y2="294.5" stroke="#7a7a7a"/><line x1="982" y1="301.5" x2="985" y2="301.5" stroke="#7a7a7a"/><line x1="982" y1="314.5" x2="985" y2="314.5" stroke="#7a7a7a"/><line x1="982" y1="321.5" x2="985" y2="321.5" stroke="#7a7a7a"/><line x1="982" y1="327.5" x2="985" y2="327.5" stroke="#7a7a7a"/><line x1="982" y1="340.5" x2="985" y2="340.5" stroke="#7a7a7a"/><line x1="982" y1="347.5" x2="985" y2="347.5" stroke="#7a7a7a"/><line x1="982" y1="353.5" x2="985" y2="353.5" stroke="#7a7a7a"/><line x1="982" y1="366.5" x2="985" y2="366.5" stroke="#7a7a7a"/><line x1="982" y1="373.5" x2="985" y2="373.5" stroke="#7a7a7a"/><line x1="982" y1="379.5" x2="985" y2="379.5" stroke="#7a7a7a"/><line x1="982" y1="392.5" x2="985" y2="392.5" stroke="#7a7a7a"/><line x1="982" y1="399.5" x2="985" y2="399.5" stroke="#7a7a7a"/><line x1="982" y1="405.5" x2="985" y2="405.5" stroke="#7a7a7a"/><polyline points="83.5,357.5 83.5,354.5 84.5,357.5 84.5,355.5 85.5,358.5 85.5,353.5 86.5,356.5 86.5,358.5 87.5,358.5 87.5,361.5 88.5,359.5 88.5,356.5 89.5,358.5 89.5,356.5 90.5,355.5 90.5,357.5 91.5,355.5 91.5,358.5 92.5,355.5 92.5,357.5 93.5,358.5 93.5,357.5 94.5,356.5 94.5,357.5 95.5,358.5 95.5,358.5 96.5,357.5 96.5,359.5 97.5,356.5 97.5,358.5 98.5,361.5 98.5,358.5 99.5,360.5 99.5,357.5 100.5,360.5 100.5,355.5 101.5,360.5 101.5,356.5 102.5,358.5 102.5,361.5 103.5,359.5 103.5,356.5 104.5,357.5 104.5,355.5 105.5,355.5 105.5,358.5 106.5,357.5 106.5,364.5 107.5,358.5 107.5,360.5 108.5,359.5 108.5,356.5 109.5,357.5 109.5,357.5 110.5,358.5 110.5,364.5 111.5,359.5 111.5,356.5 112.5,358.5 112.5,358.5 113.5,356.5 113.5,363.5 114.5,356.5 114.5,355.5 115.5,355.5 115.5,358.5 116.5,354.5 116.5,357.5 117.5,357.5 117.5,355.5 118.5,356.5 118.5,354.5 119.5,354.5 119.5,357.5 120.5,355.5 120.5,357.5 121.5,356.5 121.5,353.5 122.5,354.5 122.5,354.5 123.5,353.5 123.5,356.5 124.5,354.5 124.5,356.5 125.5,354.5 125.5,351.5 126.5,356.5 126.5,354.5 127.5,355.5 127.5,356.5 128.5,356.5 128.5,354.5 129.5,352.5 129.5,355.5 130.5,360.5 130.5,353.5 131.5,358.5 131.5,354.5 132.5,357.5 132.5,356.5 133.5,357.5 133.5,353.5 134.5,355.5 134.5,356.5 135.5,355.5 135.5,354.5 136.5,354.5 136.5,357.5 137.5,352.5 137.5,358.5 138.5,355.5 138.5,352.5 139.5,355.5 139.5,357.5 140.5,356.5 140.5,353.5 141.5,357.5 141.5,353.5 142.5,356.5 142.5,360.5 143.5,357.5 143.5,359.5 144.5,358.5 144.5,360.5 145.5,358.5 145.5,357.5 146.5,357.5 146.5,361.5 147.5,359.5 147.5,357.5 148.5,360.5 148.5,357.5 149.5,358.5 149.5,355.5 150.5,357.5 150.5,359.5 151.5,359.5 151.5,357.5 152.5,355.5 152.5,358.5 153.5,358.5 153.5,355.5 154.5,355.5 154.5,356.5 155.5,357.5 155.5,356.5 156.5,355.5 156.5,357.5 157.5,356.5 157.5,355.5 158.5,352.5 158.5,357.5 159.5,358.5 159.5,356.5 160.5,359.5 160.5,357.5 161.5,356.5 161.5,354.5 162.5,354.5 162.5,356.5 163.5,354.5 163.5,357.5 164.5,356.5 164.5,355.5 165.5,354.5 165.5,356.5 166.5,358.5 166.5,354.5 167.5,356.5 167.5,358.5 168.5,358.5 168.5,354.5 169.5,359.5 169.5,356.5 170.5,357.5 170.5,356.5 171.5,354.5 171.5,356.5 172.5,357.5 172.5,356.5 173.5,355.5 173.5,357.5 174.5,359.5 174.5,357.5 175.5,358.5 175.5,356.5 176.5,355.5 176.5,353.5 177.5,357.5 177.5,354.5 178.5,352.5 178.5,356.5 179.5,353.5 179.5,354.5 180.5,355.5 180.5,353.5 181.5,353.5 181.5,356.5 182.5,356.5 182.5,353.5 183.5,353.5 183.5,355.5 184.5,355.5 184.5,358.5 185.5,358.5 185.5,354.5 186.5,356.5 186.5,354.5 187.5,356.5 187.5,357.5 188.5,356.5 188.5,354.5 189.5,356.5 189.5,354.5 190.5,355.5 190.5,357.5 191.5,362.5 191.5,356.5 192.5,359.5 192.5,357.5 193.5,357.5 193.5,360.5 194.5,357.5 194.5,360.5 195.5,360.5 195.5,361.5 196.5,359.5 196.5,360.5 197.5,357.5 197.5,359.5 198.5,360.5 198.5,356.5 199.5,359.5 199.5,355.5 200.5,358.5 200.5,356.5 201.5,356.5 201.5,355.5 202.5,353.5 202.5,355.5 203.5,355.5 203.5,356.5 204.5,352.5 204.5,358.5 205.5,354.5 205.5,358.5 206.5,357.5 206.5,354.5 207.5,357.5 207.5,355.5 208.5,358.5 208.5,357.5 209.5,358.5 209.5,360.5 210.5,353.5 210.5,358.5 211.5,356.5 211.5,357.5 212.5,355.5 212.5,357.5 213.5,357.5 213.5,355.5 214.5,355.5 214.5,359.5 215.5,359.5 215.5,356.5 216.5,355.5 216.5,357.5 217.5,357.5 217.5,354.5 218.5,357.5 218.5,355.5 219.5,362.5 219.5,356.5 220.5,356.5 220.5,355.5 221.5,358.5 221.5,353.5 222.5,354.5 222.5,358.5 223.5,355.5 223.5,357.5 224.5,359.5 224.5,356.5 225.5,359.5 225.5,357.5 226.5,358.5 226.5,354.5 227.5,356.5 227.5,359.5 228.5,358.5 228.5,356.5 229.5,357.5 229.5,355.5 230.5,362.5 230.5,356.5 231.5,356.5 231.5,359.5 232.5,358.5 232.5,354.5 233.5,357.5 233.5,356.5 234.5,355.5 234.5,358.5 235.5,357.5 235.5,355.5 236.5,358.5 236.5,358.5 237.5,359.5 237.5,357.5 238.5,356.5 238.5,357.5 239.5,354.5 239.5,356.5 240.5,359.5 240.5,356.5 241.5,355.5 241.5,354.5 242.5,351.5 242.5,360.5 243.5,355.5 243.5,349.5 244.5,355.5 244.5,357.5 245.5,357.5 245.5,356.5 246.5,354.5 246.5,357.5 247.5,358.5 247.5,355.5 248.5,358.5 248.5,352.5 249.5,357.5 249.5,355.5 250.5,359.5 250.5,357.5 251.5,356.5 251.5,358.5 252.5,357.5 252.5,360.5 253.5,359.5 253.5,356.5 254.5,357.5 254.5,359.5 255.5,361.5 255.5,359.5 256.5,360.5 256.5,360.5 257.5,361.5 257.5,355.5 258.5,358.5 258.5,361.5 259.5,361.5 259.5,358.5 260.5,357.5 260.5,359.5 261.5,359.5 261.5,353.5 262.5,360.5 262.5,358.5 263.5,359.5 263.5,357.5 264.5,355.5 264.5,359.5 265.5,358.5 265.5,358.5 266.5,358.5 267.5,400.5 268.5,388.5 269.5,363.5 270.5,395.5 271.5,384.5 272.5,372.5 273.5,384.5 274.5,395.5 275.5,384.5 276.5,373.5 277.5,380.5 278.5,389.5 279.5,375.5 280.5,377.5 281.5,383.5 282.5,386.5 283.5,390.5 284.5,375.5 285.5,381.5 286.5,386.5 287.5,377.5 288.5,385.5 289.5,374.5 290.5,380.5 291.5,388.5 292.5,376.5 293.5,381.5 294.5,385.5 295.5,377.5 296.5,380.5 296.5,383.5 297.5,382.5 297.5,380.5 298.5,381.5 298.5,379.5 299.5,381.5 299.5,383.5 300.5,382.5 300.5,381.5 301.5,382.5 301.5,377.5 302.5,383.5 302.5,381.5 303.5,380.5 303.5,381.5 304.5,380.5 304.5,382.5 305.5,379.5 305.5,381.5 306.5,382.5 306.5,379.5 307.5,380.5 307.5,377.5 308.5,381.5 308.5,377.5 309.5,379.5 309.5,376.5 310.5,377.5 310.5,379.5 311.5,377.5 311.5,380.5 312.5,376.5 312.5,377.5 313.5,375.5 313.5,380.5 314.5,377.5 314.5,376.5 315.5,377.5 315.5,380.5 316.5,377.5 316.5,380.5 317.5,376.5 317.5,378.5 318.5,378.5 318.5,377.5 319.5,377.5 319.5,378.5 320.5,379.5 320.5,377.5 321.5,381.5 321.5,378.5 322.5,377.5 322.5,379.5 323.5,379.5 323.5,381.5 324.5,381.5 324.5,380.5 325.5,380.5 325.5,378.5 326.5,380.5 326.5,381.5 327.5,380.5 327.5,379.5 328.5,382.5 328.5,380.5 329.5,377.5 329.5,381.5 330.5,379.5 330.5,381.5 331.5,381.5 331.5,376.5 332.5,374.5 332.5,379.5 333.5,375.5 333.5,377.5 334.5,376.5 334.5,379.5 335.5,379.5 335.5,377.5 336.5,380.5 336.5,377.5 337.5,376.5 337.5,374.5 338.5,378.5 338.5,375.5 339.5,376.5 339.5,378.5 340.5,382.5 340.5,374.5 341.5,375.5 341.5,381.5 342.5,379.5 342.5,377.5 343.5,375.5 343.5,376.5 344.5,374.5 344.5,376.5 345.5,375.5 345.5,376.5 346.5,373.5 346.5,377.5 347.5,373.5 347.5,375.5 348.5,373.5 348.5,376.5 349.5,374.5 349.5,376.5 350.5,375.5 350.5,376.5 351.5,378.5 351.5,377.5 352.5,376.5 352.5,379.5 353.5,376.5 353.5,375.5 354.5,385.5 354.5,377.5 355.5,379.5 355.5,376.5 356.5,378.5 356.5,376.5 357.5,376.5 357.5,378.5 358.5,376.5 358.5,379.5 359.5,376.5 359.5,377.5 360.5,378.5 360.5,376.5 361.5,376.5 361.5,379.5 362.5,374.5 362.5,378.5 363.5,376.5 363.5,370.5 364.5,375.5 364.5,379.5 365.5,375.5 365.5,377.5 366.5,377.5 366.5,375.5 367.5,374.5 367.5,377.5 368.5,376.5 368.5,377.5 369.5,383.5 369.5,375.5 370.5,375.5 370.5,378.5 371.5,376.5 371.5,374.5 372.5,371.5 372.5,375.5 373.5,373.5 373.5,375.5 374.5,373.5 374.5,375.5 375.5,376.5 375.5,373.5 376.5,375.5 376.5,376.5 377.5,375.5 377.5,381.5 378.5,377.5 378.5,376.5 379.5,376.5 379.5,375.5 380.5,376.5 380.5,374.5 381.5,374.5 381.5,376.5 382.5,374.5 382.5,372.5 383.5,375.5 383.5,373.5 384.5,375.5 384.5,374.5 385.5,373.5 385.5,375.5 386.5,376.5 386.5,373.5 387.5,375.5 387.5,377.5 388.5,375.5 388.5,372.5 389.5,372.5 389.5,375.5 390.5,371.5 390.5,374.5 391.5,372.5 391.5,374.5 392.5,374.5 392.5,378.5 393.5,372.5 393.5,376.5 394.5,372.5 394.5,375.5 395.5,374.5 395.5,372.5 396.5,371.5 396.5,374.5 397.5,371.5 397.5,373.5 398.5,371.5 398.5,372.5 399.5,370.5 399.5,371.5 400.5,372.5 400.5,369.5 401.5,372.5 401.5,371.5 402.5,372.5 402.5,373.5 403.5,373.5 403.5,371.5 404.5,373.5 404.5,371.5 405.5,371.5 405.5,374.5 406.5,372.5 406.5,375.5 407.5,372.5 407.5,373.5 408.5,372.5 408.5,373.5 409.5,372.5 409.5,377.5 410.5,372.5 410.5,375.5 411.5,372.5 411.5,374.5 412.5,371.5 412.5,374.5 413.5,376.5 413.5,373.5 414.5,373.5 414.5,373.5 415.5,373.5 415.5,375.5 416.5,374.5 416.5,372.5 417.5,376.5 417.5,373.5 418.5,372.5 418.5,370.5 419.5,371.5 419.5,369.5 420.5,373.5 420.5,371.5 421.5,373.5 421.5,372.5 422.5,372.5 422.5,371.5 423.5,370.5 423.5,372.5 424.5,373.5 424.5,374.5 425.5,371.5 425.5,374.5 426.5,371.5 426.5,374.5 427.5,374.5 427.5,372.5 428.5,374.5 428.5,372.5 429.5,372.5 429.5,370.5 430.5,373.5 430.5,371.5 431.5,372.5 431.5,375.5 432.5,373.5 432.5,370.5 433.5,372.5 433.5,370.5 434.5,377.5 434.5,370.5 435.5,370.5 435.5,374.5 436.5,372.5 436.5,369.5 437.5,375.5 437.5,373.5 438.5,377.5 438.5,373.5 439.5,375.5 439.5,373.5 440.5,372.5 440.5,376.5 441.5,369.5 441.5,375.5 442.5,375.5 442.5,372.5 443.5,374.5 443.5,375.5 444.5,371.5 444.5,375.5 445.5,371.5 445.5,375.5 446.5,374.5 446.5,373.5 447.5,371.5 447.5,372.5 448.5,372.5 448.5,370.5 449.5,369.5 449.5,372.5 450.5,368.5 450.5,372.5 451.5,370.5 451.5,372.5 452.5,373.5 452.5,375.5 453.5,372.5 453.5,375.5 454.5,371.5 454.5,373.5 455.5,373.5 455.5,370.5 456.5,369.5 456.5,372.5 457.5,371.5 457.5,374.5 458.5,370.5 458.5,372.5 459.5,373.5 459.5,372.5 460.5,372.5 460.5,375.5 461.5,374.5 461.5,372.5 462.5,370.5 462.5,374.5 463.5,371.5 463.5,370.5 464.5,372.5 464.5,368.5 465.5,367.5 465.5,370.5 466.5,369.5 466.5,371.5 467.5,371.5 467.5,370.5 468.5,371.5 468.5,366.5 469.5,368.5 469.5,370.5 470.5,369.5 470.5,379.5 471.5,370.5 471.5,372.5 472.5,370.5 472.5,372.5 473.5,369.5 473.5,372.5 474.5,371.5 474.5,376.5 475.5,373.5 475.5,371.5 476.5,372.5 476.5,369.5 477.5,371.5 477.5,368.5 478.5,368.5 478.5,370.5 479.5,367.5 479.5,369.5 480.5,366.5 480.5,371.5 481.5,370.5 481.5,367.5 482.5,370.5 482.5,368.5 483.5,368.5 483.5,369.5 484.5,369.5 484.5,371.5 485.5,368.5 485.5,368.5 486.5,368.5 486.5,367.5 487.5,368.5 487.5,366.5 488.5,367.5 488.5,369.5 489.5,368.5 489.5,367.5 490.5,368.5 490.5,369.5 491.5,366.5 491.5,369.5 492.5,372.5 492.5,369.5 493.5,367.5 493.5,370.5 494.5,371.5 494.5,369.5 495.5,368.5 495.5,376.5 496.5,370.5 496.5,368.5 497.5,368.5 497.5,371.5 498.5,367.5 498.5,369.5 499.5,370.5 499.5,366.5 500.5,368.5 500.5,367.5 501.5,367.5 501.5,365.5 502.5,363.5 502.5,366.5 503.5,366.5 503.5,363.5 504.5,366.5 504.5,364.5 505.5,366.5 506.5,361.5 507.5,353.5 508.5,347.5 509.5,340.5 510.5,334.5 511.5,338.5 512.5,342.5 513.5,346.5 514.5,350.5 515.5,355.5 516.5,358.5 517.5,362.5 518.5,362.5 519.5,363.5 520.5,362.5 521.5,360.5 522.5,356.5 523.5,354.5 524.5,352.5 525.5,349.5 526.5,350.5 527.5,351.5 528.5,355.5 529.5,355.5 530.5,358.5 531.5,357.5 532.5,357.5 533.5,357.5 534.5,358.5 535.5,356.5 535.5,358.5 536.5,356.5 536.5,354.5 537.5,357.5 537.5,354.5 538.5,354.5 538.5,356.5 539.5,357.5 539.5,355.5 540.5,354.5 540.5,358.5 541.5,356.5 541.5,359.5 542.5,357.5 542.5,358.5 543.5,356.5 543.5,357.5 544.5,356.5 544.5,359.5 545.5,360.5 545.5,357.5 546.5,354.5 546.5,358.5 547.5,356.5 547.5,359.5 548.5,360.5 548.5,357.5 549.5,357.5 549.5,355.5 550.5,356.5 550.5,358.5 551.5,355.5 551.5,358.5 552.5,356.5 552.5,355.5 553.5,355.5 553.5,358.5 554.5,356.5 554.5,358.5 555.5,355.5 555.5,357.5 556.5,358.5 556.5,354.5 557.5,358.5 557.5,354.5 558.5,358.5 558.5,354.5 559.5,358.5 559.5,356.5 560.5,358.5 560.5,357.5 561.5,355.5 561.5,357.5 562.5,358.5 562.5,355.5 563.5,364.5 563.5,356.5 564.5,354.5 564.5,355.5 565.5,355.5 565.5,353.5 566.5,353.5 566.5,356.5 567.5,353.5 567.5,355.5 568.5,354.5 568.5,356.5 569.5,356.5 569.5,355.5 570.5,353.5 570.5,356.5 571.5,354.5 571.5,357.5 572.5,352.5 572.5,356.5 573.5,354.5 573.5,357.5 574.5,321.5 575.5,322.5 576.5,323.5 577.5,322.5 578.5,323.5 579.5,322.5 580.5,324.5 581.5,325.5 582.5,325.5 583.5,328.5 584.5,327.5 585.5,328.5 586.5,331.5 587.5,331.5 588.5,331.5 589.5,330.5 590.5,333.5 590.5,331.5 591.5,333.5 591.5,330.5 592.5,331.5 592.5,332.5 593.5,331.5 593.5,332.5 594.5,332.5 594.5,331.5 595.5,327.5 595.5,330.5 596.5,331.5 596.5,324.5 597.5,331.5 597.5,329.5 598.5,329.5 598.5,332.5 599.5,331.5 599.5,333.5 600.5,333.5 600.5,338.5 601.5,332.5 601.5,334.5 602.5,332.5 602.5,333.5 603.5,331.5 603.5,333.5 604.5,331.5 604.5,334.5 605.5,332.5 605.5,329.5 606.5,331.5 606.5,329.5 607.5,332.5 607.5,330.5 608.5,329.5 608.5,332.5 609.5,332.5 609.5,329.5 610.5,330.5 610.5,331.5 611.5,328.5 611.5,330.5 612.5,326.5 612.5,329.5 613.5,328.5 613.5,332.5 614.5,332.5 614.5,330.5 615.5,333.5 615.5,331.5 616.5,331.5 616.5,331.5 617.5,333.5 617.5,330.5 618.5,329.5 618.5,327.5 619.5,329.5 619.5,330.5 620.5,332.5 620.5,328.5 621.5,332.5 621.5,329.5 622.5,331.5 622.5,329.5 623.5,331.5 623.5,329.5 624.5,332.5 624.5,329.5 625.5,331.5 625.5,332.5 626.5,331.5 626.5,329.5 627.5,330.5 627.5,331.5 628.5,328.5 628.5,331.5 629.5,333.5 629.5,329.5 630.5,331.5 630.5,329.5 631.5,331.5 631.5,329.5 632.5,329.5 632.5,331.5 633.5,337.5 633.5,329.5 634.5,329.5 634.5,331.5 635.5,332.5 635.5,329.5 636.5,328.5 636.5,332.5 637.5,327.5 637.5,329.5 638.5,328.5 638.5,326.5 639.5,326.5 639.5,329.5 640.5,328.5 640.5,327.5 641.5,324.5 641.5,329.5 642.5,327.5 642.5,330.5 643.5,327.5 643.5,329.5 644.5,326.5 644.5,329.5 645.5,328.5 645.5,325.5 646.5,325.5 646.5,327.5 647.5,329.5 647.5,327.5 648.5,328.5 648.5,331.5 649.5,328.5 649.5,330.5 650.5,328.5 650.5,330.5 651.5,332.5 651.5,328.5 652.5,327.5 652.5,330.5 653.5,329.5 653.5,327.5 654.5,327.5 654.5,324.5 655.5,330.5 655.5,324.5 656.5,326.5 656.5,329.5 657.5,325.5 657.5,329.5 658.5,328.5 658.5,325.5 659.5,327.5 659.5,324.5 660.5,326.5 660.5,324.5 661.5,325.5 661.5,327.5 662.5,324.5 662.5,327.5 663.5,327.5 663.5,324.5 664.5,323.5 664.5,326.5 665.5,326.5 665.5,323.5 666.5,324.5 666.5,323.5 667.5,325.5 667.5,324.5 668.5,324.5 668.5,324.5 669.5,326.5 669.5,324.5 670.5,330.5 670.5,323.5 671.5,324.5 671.5,325.5 672.5,324.5 672.5,321.5 673.5,323.5 673.5,321.5 674.5,323.5 674.5,321.5 675.5,322.5 675.5,324.5 676.5,321.5 677.5,321.5 678.5,311.5 679.5,302.5 680.5,293.5 681.5,285.5 682.5,275.5 683.5,280.5 684.5,283.5 685.5,289.5 686.5,307.5 687.5,327.5 688.5,345.5 689.5,364.5 690.5,384.5 691.5,378.5 692.5,369.5 693.5,362.5 694.5,353.5 695.5,346.5 696.5,338.5 697.5,343.5 698.5,345.5 699.5,349.5 700.5,353.5 701.5,357.5 702.5,360.5 703.5,363.5 704.5,366.5 705.5,365.5 706.5,362.5 707.5,359.5 708.5,357.5 709.5,355.5 710.5,352.5 711.5,349.5 712.5,351.5 713.5,353.5 714.5,353.5 715.5,354.5 716.5,355.5 716.5,357.5 717.5,358.5 717.5,355.5 718.5,355.5 718.5,356.5 719.5,352.5 719.5,355.5 720.5,356.5 720.5,354.5 721.5,356.5 721.5,352.5 722.5,356.5 722.5,354.5 723.5,355.5 723.5,357.5 724.5,353.5 724.5,356.5 725.5,355.5 725.5,358.5 726.5,354.5 726.5,356.5 727.5,354.5 727.5,351.5 728.5,354.5 728.5,351.5 729.5,354.5 729.5,352.5 730.5,354.5 730.5,359.5 731.5,355.5 731.5,353.5 732.5,355.5 732.5,352.5 733.5,354.5 733.5,355.5 734.5,353.5 734.5,357.5 735.5,356.5 735.5,353.5 736.5,355.5 736.5,362.5 737.5,354.5 737.5,356.5 738.5,354.5 738.5,355.5 739.5,357.5 739.5,354.5 740.5,355.5 740.5,357.5 741.5,356.5 741.5,357.5 742.5,356.5 742.5,357.5 743.5,356.5 743.5,354.5 744.5,354.5 744.5,353.5 745.5,362.5 745.5,355.5 746.5,355.5 746.5,358.5 747.5,356.5 747.5,356.5 748.5,356.5 748.5,355.5 749.5,354.5 749.5,357.5 750.5,351.5 750.5,353.5 751.5,351.5 751.5,354.5 752.5,353.5 752.5,354.5 753.5,354.5 753.5,352.5 754.5,354.5 754.5,353.5 755.5,353.5 755.5,354.5 756.5,356.5 756.5,353.5 757.5,355.5 757.5,353.5 758.5,356.5 758.5,354.5 759.5,360.5 759.5,355.5 760.5,354.5 760.5,357.5 761.5,356.5 761.5,357.5 762.5,354.5 762.5,356.5 763.5,356.5 763.5,358.5 764.5,354.5 764.5,356.5 765.5,361.5 765.5,354.5 766.5,359.5 766.5,353.5 767.5,355.5 767.5,357.5 768.5,353.5 768.5,356.5 769.5,353.5 769.5,355.5 770.5,354.5 770.5,352.5 771.5,356.5 771.5,352.5 772.5,349.5 772.5,352.5 773.5,352.5 773.5,355.5 774.5,355.5 774.5,353.5 775.5,356.5 775.5,352.5 776.5,356.5 776.5,352.5 777.5,353.5 777.5,354.5 778.5,357.5 778.5,354.5 779.5,358.5 779.5,355.5 780.5,357.5 780.5,355.5 781.5,353.5 781.5,355.5 782.5,356.5 782.5,357.5 783.5,357.5 783.5,354.5 784.5,356.5 784.5,354.5 785.5,354.5 785.5,355.5 786.5,355.5 786.5,353.5 787.5,355.5 787.5,357.5 788.5,354.5 788.5,356.5 789.5,354.5 789.5,356.5 790.5,355.5 790.5,353.5 791.5,350.5 791.5,357.5 792.5,354.5 792.5,358.5 793.5,353.5 793.5,357.5 794.5,356.5 794.5,355.5 795.5,354.5 795.5,357.5 796.5,355.5 796.5,354.5 797.5,354.5 797.5,352.5 798.5,355.5 798.5,353.5 799.5,351.5 799.5,355.5 800.5,351.5 800.5,353.5 801.5,354.5 801.5,350.5 802.5,351.5 802.5,354.5 803.5,351.5 803.5,353.5 804.5,355.5 804.5,353.5 805.5,354.5 805.5,356.5 806.5,354.5 806.5,355.5 807.5,353.5 807.5,360.5 808.5,358.5 808.5,356.5 809.5,356.5 809.5,357.5 810.5,357.5 810.5,354.5 811.5,357.5 811.5,355.5 812.5,357.5 812.5,353.5 813.5,352.5 813.5,355.5 814.5,354.5 814.5,352.5 815.5,354.5 815.5,351.5 816.5,353.5 816.5,354.5 817.5,356.5 817.5,354.5 818.5,358.5 818.5,355.5 819.5,356.5 819.5,359.5 820.5,358.5 820.5,355.5 821.5,356.5 821.5,354.5 822.5,356.5 822.5,352.5 823.5,359.5 823.5,357.5 824.5,359.5 824.5,357.5 825.5,358.5 825.5,357.5 826.5,356.5 826.5,357.5 827.5,355.5 827.5,358.5 828.5,359.5 828.5,357.5 829.5,357.5 829.5,357.5 830.5,356.5 830.5,356.5 831.5,356.5 831.5,361.5 832.5,354.5 832.5,357.5 833.5,358.5 833.5,356.5 834.5,357.5 834.5,352.5 835.5,354.5 835.5,357.5 836.5,358.5 836.5,354.5 837.5,356.5 837.5,358.5 838.5,358.5 838.5,355.5 839.5,355.5 839.5,356.5 840.5,360.5 840.5,357.5 841.5,356.5 841.5,358.5 842.5,357.5 842.5,362.5 843.5,354.5 843.5,360.5 844.5,355.5 844.5,356.5 845.5,355.5 845.5,357.5 846.5,354.5 846.5,355.5 847.5,357.5 847.5,355.5 848.5,356.5 848.5,353.5 849.5,355.5 849.5,353.5 850.5,355.5 850.5,353.5 851.5,351.5 851.5,359.5 852.5,351.5 852.5,353.5 853.5,353.5 853.5,352.5 854.5,350.5 854.5,353.5 855.5,350.5 855.5,355.5 856.5,353.5 856.5,351.5 857.5,351.5 857.5,353.5 858.5,355.5 858.5,353.5 859.5,354.5 859.5,357.5 860.5,354.5 860.5,356.5 861.5,361.5 861.5,356.5 862.5,361.5 862.5,355.5 863.5,353.5 863.5,357.5 864.5,354.5 864.5,357.5 865.5,355.5 865.5,353.5 866.5,356.5 866.5,354.5 867.5,354.5 867.5,357.5 868.5,353.5 868.5,357.5 869.5,354.5 869.5,359.5 870.5,355.5 870.5,358.5 871.5,354.5 871.5,358.5 872.5,357.5 872.5,355.5 873.5,355.5 873.5,356.5 874.5,357.5 874.5,354.5 875.5,356.5 875.5,359.5 876.5,357.5 876.5,358.5 877.5,358.5 877.5,354.5 878.5,352.5 878.5,355.5 879.5,352.5 879.5,354.5 880.5,355.5 880.5,351.5 881.5,353.5 881.5,356.5 882.5,352.5 882.5,360.5 883.5,354.5 883.5,350.5 884.5,356.5 884.5,353.5 885.5,356.5 885.5,355.5 886.5,355.5 886.5,357.5 887.5,357.5 887.5,355.5 888.5,357.5 888.5,354.5 889.5,358.5 889.5,354.5 890.5,357.5 890.5,355.5 891.5,357.5 891.5,359.5 892.5,357.5 892.5,362.5 893.5,359.5 893.5,355.5 894.5,356.5 894.5,358.5 895.5,356.5 895.5,350.5 896.5,361.5 896.5,354.5 897.5,359.5 897.5,353.5 898.5,356.5 898.5,354.5 899.5,353.5 899.5,355.5 900.5,356.5 900.5,353.5 901.5,363.5 901.5,353.5 902.5,360.5 902.5,355.5 903.5,356.5 903.5,356.5 904.5,356.5 904.5,355.5 905.5,355.5 905.5,355.5 906.5,356.5 906.5,358.5 907.5,356.5 907.5,355.5 908.5,352.5 908.5,355.5 909.5,352.5 909.5,358.5 910.5,355.5 910.5,351.5 911.5,355.5 911.5,354.5 912.5,352.5 912.5,355.5 913.5,356.5 913.5,353.5 914.5,354.5 914.5,355.5 915.5,351.5 915.5,355.5 916.5,354.5 916.5,358.5 917.5,354.5 917.5,356.5 918.5,358.5 918.5,356.5 919.5,355.5 919.5,355.5 920.5,353.5 920.5,357.5 921.5,357.5 921.5,355.5 922.5,357.5 922.5,354.5 923.5,356.5 923.5,355.5 924.5,352.5 924.5,355.5 925.5,354.5 925.5,358.5 926.5,356.5 926.5,354.5 927.5,354.5 927.5,355.5 928.5,356.5 928.5,352.5 929.5,352.5 929.5,358.5 930.5,354.5 930.5,354.5 931.5,356.5 931.5,352.5" fill="none" stroke="#ff0000" stroke-width="1"/><line x1="575.5" y1="69" x2="575.5" y2="405" stroke="#ff0000"/><line x1="576.5" y1="199" x2="576.5" y2="352" stroke="#ff0000"/><line x1="577.5" y1="298" x2="577.5" y2="330" stroke="#ff0000"/><polyline points="39.5,351.5 39.5,366.5 39.5,355.5 39.5,362.5 40.5,352.5 40.5,366.5 40.5,354.5 40.5,366.5 41.5,354.5 41.5,362.5 41.5,355.5 41.5,361.5 42.5,353.5 42.5,364.5 42.5,355.5 42.5,362.5 43.5,351.5 43.5,367.5 43.5,354.5 43.5,365.5 44.5,354.5 44.5,365.5 44.5,354.5 44.5,366.5 45.5,351.5 45.5,363.5 45.5,352.5 45.5,365.5 46.5,353.5 46.5,367.5 46.5,351.5 46.5,366.5 47.5,350.5 47.5,363.5 47.5,355.5 47.5,361.5 47.5,409.5 48.5,385.5 48.5,397.5 49.5,385.5 49.5,396.5 50.5,382.5 50.5,396.5 51.5,380.5 51.5,393.5 52.5,376.5 52.5,390.5 53.5,374.5 53.5,389.5 54.5,373.5 54.5,383.5 55.5,367.5 55.5,381.5 56.5,368.5 56.5,379.5 57.5,340.5 58.5,325.5 58.5,337.5 59.5,319.5 59.5,335.5 60.5,313.5 60.5,333.5 61.5,310.5 61.5,333.5 62.5,305.5 62.5,329.5 63.5,302.5 63.5,326.5 64.5,280.5 65.5,380.5 65.5,356.5 66.5,350.5 66.5,364.5 66.5,354.5 66.5,365.5 67.5,353.5 67.5,362.5 67.5,351.5 67.5,366.5 68.5,353.5 68.5,364.5 68.5,352.5 68.5,361.5 69.5,349.5 69.5,365.5 69.5,353.5 69.5,361.5 70.5,351.5 70.5,362.5 70.5,353.5 70.5,362.5 71.5,349.5 71.5,364.5 71.5,353.5 71.5,364.5 72.5,349.5 72.5,362.5 72.5,354.5 72.5,365.5 73.5,349.5 73.5,365.5 73.5,354.5 73.5,363.5 74.5,353.5 74.5,364.5 74.5,354.5 74.5,362.5 75.5,349.5 75.5,364.5 75.5,350.5 75.5,361.5" fill="none" stroke="#ff0000" stroke-width="1"/><line x1="60.5" y1="69" x2="60.5" y2="362" stroke="#ff0000"/><polyline points="940.5,354.5 940.5,364.5 940.5,353.5 940.5,366.5 941.5,354.5 941.5,362.5 941.5,354.5 941.5,362.5 942.5,350.5 942.5,363.5 942.5,351.5 942.5,363.5 943.5,353.5 943.5,363.5 943.5,354.5 943.5,365.5 944.5,350.5 944.5,366.5 944.5,352.5 944.5,361.5 945.5,351.5 945.5,365.5 945.5,353.5 945.5,362.5 946.5,353.5 946.5,363.5 946.5,351.5 946.5,362.5 947.5,354.5 947.5,366.5 947.5,354.5 947.5,362.5 948.5,351.5 948.5,362.5 948.5,351.5 948.5,362.5 948.5,409.5 949.5,387.5 949.5,401.5 950.5,382.5 950.5,395.5 951.5,380.5 951.5,393.5 952.5,380.5 952.5,392.5 953.5,375.5 953.5,391.5 954.5,373.5 954.5,389.5 955.5,371.5 955.5,382.5 956.5,369.5 956.5,384.5 957.5,365.5 957.5,379.5 958.5,340.5 959.5,327.5 959.5,340.5 960.5,320.5 960.5,338.5 961.5,311.5 961.5,331.5 962.5,307.5 962.5,331.5 963.5,301.5 963.5,325.5 964.5,296.5 964.5,319.5 965.5,290.5 966.5,380.5 966.5,356.5 967.5,349.5 967.5,364.5 967.5,353.5 967.5,361.5 968.5,353.5 968.5,365.5 968.5,352.5 968.5,364.5 969.5,353.5 969.5,362.5 969.5,353.5 969.5,361.5 970.5,350.5 970.5,366.5 970.5,351.5 970.5,361.5 971.5,350.5 971.5,365.5 971.5,352.5 971.5,365.5 972.5,351.5 972.5,366.5 972.5,352.5 972.5,364.5 973.5,349.5 973.5,366.5 973.5,352.5 973.5,363.5 974.5,349.5 974.5,365.5 974.5,350.5 974.5,362.5 975.5,351.5 975.5,366.5 975.5,354.5 975.5,363.5 976.5,350.5 976.5,364.5 976.5,352.5 976.5,366.5" fill="none" stroke="#ff0000" stroke-width="1"/><line x1="961.5" y1="99" x2="961.5" y2="389" stroke="#ff0000"/><polyline points="984.5,353.5 984.5,366.5 984.5,353.5 984.5,363.5 985.5,351.5 985.5,363.5 985.5,351.5 985.5,363.5 986.5,354.5 986.5,365.5 986.5,355.5 986.5,361.5 987.5,352.5 987.5,366.5 987.5,355.5 987.5,366.5 988.5,350.5 988.5,367.5 988.5,354.5 988.5,362.5 989.5,353.5 989.5,367.5 989.5,354.5 989.5,362.5 990.5,351.5 990.5,363.5 990.5,351.5 990.5,361.5 990.5,409.5 991.5,385.5 991.5,400.5 992.5,385.5 992.5,395.5 993.5,381.5 993.5,395.5 994.5,379.5 994.5,392.5 995.5,374.5 995.5,387.5 996.5,373.5 996.5,387.5 997.5,371.5 997.5,384.5 998.5,366.5 998.5,379.5 999.5,340.5 1000.5,317.5 1000.5,339.5 1001.5,308.5 1001.5,330.5 1002.5,306.5 1002.5,328.5 1003.5,299.5 1004.5,380.5 1004.5,356.5 1005.5,350.5 1005.5,362.5 1005.5,351.5 1005.5,364.5 1006.5,349.5 1006.5,366.5 1006.5,350.5 1006.5,361.5 1007.5,353.5 1007.5,363.5 1007.5,351.5 1007.5,363.5 1008.5,349.5 1008.5,362.5 1008.5,351.5 1008.5,365.5 1009.5,349.5 1009.5,366.5 1009.5,350.5 1009.5,365.5" fill="none" stroke="#ff0000" stroke-width="1"/><line x1="1000.5" y1="150" x2="1000.5" y2="352" stroke="#ff0000"/><rect x="38" y="68" width="38" height="2" fill="#000"/><rect x="38" y="435" width="38" height="2" fill="#000"/><rect x="38" y="68" width="1" height="369" fill="#000"/><rect x="75" y="68" width="1" height="369" fill="#000"/><rect x="82" y="68" width="851" height="2" fill="#000"/><rect x="82" y="435" width="851" height="2" fill="#000"/><rect x="82" y="68" width="1" height="369" fill="#000"/><rect x="932" y="68" width="1" height="369" fill="#000"/><rect x="939" y="68" width="38" height="2" fill="#000"/><rect x="939" y="435" width="38" height="2" fill="#000"/><rect x="939" y="68" width="1" height="369" fill="#000"/><rect x="976" y="68" width="1" height="369" fill="#000"/><rect x="983" y="68" width="29" height="2" fill="#000"/><rect x="983" y="435" width="29" height="2" fill="#000"/><rect x="983" y="68" width="1" height="369" fill="#000"/><rect x="1011" y="68" width="1" height="369" fill="#000"/><rect x="1010" y="69" width="2" height="367" fill="#008000"/><rect x="46" y="78" width="27" height="21" fill="#000"/><rect x="42.5" y="74.5" width="27" height="21" fill="#ffff00" stroke="#000"/><text x="56" y="93" text-anchor="middle" font-family="Liberation Sans" font-weight="bold" font-size="19" fill="#000080" shape-rendering="auto">1</text><rect x="90" y="78" width="27" height="21" fill="#000"/><rect x="86.5" y="74.5" width="27" height="21" fill="#fff" stroke="#000"/><text x="100" y="93" text-anchor="middle" font-family="Liberation Sans" font-weight="bold" font-size="19" fill="#000080" shape-rendering="auto">3</text><rect x="947" y="78" width="27" height="21" fill="#000"/><rect x="943.5" y="74.5" width="27" height="21" fill="#fff" stroke="#000"/><text x="957" y="93" text-anchor="middle" font-family="Liberation Sans" font-weight="bold" font-size="19" fill="#000080" shape-rendering="auto">4</text><clipPath id="c2"><rect x="984" y="70" width="26" height="40"/></clipPath><g clip-path="url(#c2)"><rect x="991" y="78" width="27" height="21" fill="#000"/><rect x="987.5" y="74.5" width="27" height="21" fill="#fff" stroke="#000"/><text x="1001" y="93" text-anchor="middle" font-family="Liberation Sans" font-weight="bold" font-size="19" fill="#000080" shape-rendering="auto">2</text></g><rect x="873.5" y="74.5" width="54" height="64" fill="#fff" stroke="#000"/><text x="878.5" y="91.4" font-family="Liberation Sans" font-weight="bold" font-size="12" fill="#000080" textLength="45" lengthAdjust="spacingAndGlyphs">11,5 kV</text><text x="878.5" y="111.4" font-family="Liberation Sans" font-weight="bold" font-size="12" fill="#000080" textLength="37.8" lengthAdjust="spacingAndGlyphs">1,2 kV</text><text x="878.5" y="131.4" font-family="Liberation Sans" font-weight="bold" font-size="12" fill="#000080" textLength="40.3" lengthAdjust="spacingAndGlyphs">1,4 ms</text><rect x="12" y="69" width="2" height="367" fill="#800080"/><path d="M6 55 L21 55 L13.5 63 Z" fill="#800080" shape-rendering="auto"/><text x="13.5" y="61" text-anchor="middle" font-family="Liberation Sans" font-weight="bold" font-size="8" fill="#fff" shape-rendering="auto">1</text><path d="M1004 55 L1019 55 L1011.5 63 Z" fill="#008000" shape-rendering="auto"/><text x="1011.5" y="61" text-anchor="middle" font-family="Liberation Sans" font-weight="bold" font-size="8" fill="#fff" shape-rendering="auto">2</text><text x="31" y="76" text-anchor="end" font-family="Liberation Sans" font-size="11" fill="#ff0000" stroke="#ff0000" stroke-width="0.25" shape-rendering="auto">11</text><text x="31" y="102" text-anchor="end" font-family="Liberation Sans" font-size="11" fill="#ff0000" stroke="#ff0000" stroke-width="0.25" shape-rendering="auto">10</text><text x="31" y="128" text-anchor="end" font-family="Liberation Sans" font-size="11" fill="#ff0000" stroke="#ff0000" stroke-width="0.25" shape-rendering="auto">9</text><text x="31" y="154" text-anchor="end" font-family="Liberation Sans" font-size="11" fill="#ff0000" stroke="#ff0000" stroke-width="0.25" shape-rendering="auto">8</text><text x="31" y="180" text-anchor="end" font-family="Liberation Sans" font-size="11" fill="#ff0000" stroke="#ff0000" stroke-width="0.25" shape-rendering="auto">7</text><text x="31" y="207" text-anchor="end" font-family="Liberation Sans" font-size="11" fill="#ff0000" stroke="#ff0000" stroke-width="0.25" shape-rendering="auto">6</text><text x="31" y="233" text-anchor="end" font-family="Liberation Sans" font-size="11" fill="#ff0000" stroke="#ff0000" stroke-width="0.25" shape-rendering="auto">5</text><text x="31" y="259" text-anchor="end" font-family="Liberation Sans" font-size="11" fill="#ff0000" stroke="#ff0000" stroke-width="0.25" shape-rendering="auto">4</text><text x="31" y="285" text-anchor="end" font-family="Liberation Sans" font-size="11" fill="#ff0000" stroke="#ff0000" stroke-width="0.25" shape-rendering="auto">3</text><text x="31" y="312" text-anchor="end" font-family="Liberation Sans" font-size="11" fill="#ff0000" stroke="#ff0000" stroke-width="0.25" shape-rendering="auto">2</text><text x="31" y="338" text-anchor="end" font-family="Liberation Sans" font-size="11" fill="#ff0000" stroke="#ff0000" stroke-width="0.25" shape-rendering="auto">1</text><text x="31" y="364" text-anchor="end" font-family="Liberation Sans" font-size="11" fill="#ff0000" stroke="#ff0000" stroke-width="0.25" shape-rendering="auto">0</text><text x="31" y="390" text-anchor="end" font-family="Liberation Sans" font-size="11" fill="#ff0000" stroke="#ff0000" stroke-width="0.25" shape-rendering="auto">-1</text><text x="31" y="416" text-anchor="end" font-family="Liberation Sans" font-size="11" fill="#ff0000" stroke="#ff0000" stroke-width="0.25" shape-rendering="auto">-2</text><path d="M31 356 L38 360.5 L31 365 Z" fill="#ff0000" shape-rendering="auto"/><line x1="40" y1="466.5" x2="989" y2="466.5" stroke="#7a7a7a" stroke-dasharray="3 3"/><line x1="35" y1="466.5" x2="38" y2="466.5" stroke="#7a7a7a"/><line x1="40" y1="493.5" x2="989" y2="493.5" stroke="#7a7a7a" stroke-dasharray="3 3"/><line x1="35" y1="493.5" x2="38" y2="493.5" stroke="#7a7a7a"/><line x1="40" y1="521.5" x2="989" y2="521.5" stroke="#7a7a7a" stroke-dasharray="3 3"/><line x1="35" y1="521.5" x2="38" y2="521.5" stroke="#7a7a7a"/><line x1="36" y1="459.5" x2="38" y2="459.5" stroke="#7a7a7a"/><line x1="991" y1="459.5" x2="993" y2="459.5" stroke="#7a7a7a"/><line x1="36" y1="473.5" x2="38" y2="473.5" stroke="#7a7a7a"/><line x1="991" y1="473.5" x2="993" y2="473.5" stroke="#7a7a7a"/><line x1="36" y1="480.5" x2="38" y2="480.5" stroke="#7a7a7a"/><line x1="991" y1="480.5" x2="993" y2="480.5" stroke="#7a7a7a"/><line x1="36" y1="487.5" x2="38" y2="487.5" stroke="#7a7a7a"/><line x1="991" y1="487.5" x2="993" y2="487.5" stroke="#7a7a7a"/><line x1="36" y1="500.5" x2="38" y2="500.5" stroke="#7a7a7a"/><line x1="991" y1="500.5" x2="993" y2="500.5" stroke="#7a7a7a"/><line x1="36" y1="507.5" x2="38" y2="507.5" stroke="#7a7a7a"/><line x1="991" y1="507.5" x2="993" y2="507.5" stroke="#7a7a7a"/><line x1="36" y1="514.5" x2="38" y2="514.5" stroke="#7a7a7a"/><line x1="991" y1="514.5" x2="993" y2="514.5" stroke="#7a7a7a"/><line x1="36" y1="528.5" x2="38" y2="528.5" stroke="#7a7a7a"/><line x1="991" y1="528.5" x2="993" y2="528.5" stroke="#7a7a7a"/><line x1="105.5" y1="453" x2="105.5" y2="528" stroke="#7a7a7a" stroke-dasharray="3 3"/><line x1="105.5" y1="530" x2="105.5" y2="536" stroke="#7a7a7a"/><line x1="39" y1="478.5" x2="989" y2="478.5" stroke="#0000ff" stroke-dasharray="3 3"/><polyline points="40.5,507.5 41.5,507.5 42.5,507.5 43.5,507.5 44.5,507.5 45.5,507.5 46.5,507.5 47.5,507.5 48.5,507.5 49.5,507.5 50.5,506.5 51.5,507.5 52.5,507.5 53.5,506.5 54.5,507.5 55.5,507.5 56.5,507.5 57.5,506.5 58.5,507.5 59.5,507.5 60.5,507.5 61.5,507.5 62.5,506.5 63.5,507.5 64.5,507.5 65.5,507.5 66.5,507.5 67.5,507.5 68.5,507.5 69.5,507.5 70.5,507.5 71.5,507.5 72.5,507.5 73.5,507.5 74.5,507.5 75.5,507.5 76.5,507.5 77.5,506.5 78.5,507.5 79.5,507.5 80.5,507.5 81.5,507.5 82.5,507.5 83.5,507.5 84.5,507.5 85.5,507.5 86.5,507.5 87.5,507.5 88.5,507.5 89.5,507.5 90.5,507.5 91.5,507.5 92.5,507.5 93.5,507.5 94.5,507.5 95.5,507.5 96.5,507.5 97.5,507.5 98.5,507.5 99.5,507.5 100.5,506.5 101.5,506.5 102.5,507.5 103.5,507.5 104.5,507.5 105.5,507.5 105.5,490.5 105.5,470.5 106.5,464.5 106.5,470.5 107.5,467.5 108.5,471.5 109.5,474.5 110.5,476.5 111.5,479.5 112.5,481.5 113.5,483.5 114.5,485.5 115.5,487.5 116.5,488.5 117.5,490.5 118.5,491.5 119.5,492.5 120.5,494.5 121.5,495.5 122.5,495.5 123.5,497.5 124.5,497.5 125.5,498.5 126.5,499.5 127.5,500.5 128.5,500.5 129.5,501.5 130.5,501.5 131.5,502.5 132.5,502.5 133.5,502.5 134.5,503.5 135.5,503.5 136.5,503.5 137.5,504.5 138.5,504.5 139.5,504.5 140.5,503.5 141.5,505.5 142.5,505.5 143.5,505.5 144.5,505.5 145.5,504.5 146.5,505.5 147.5,506.5 148.5,506.5 149.5,506.5 150.5,505.5 151.5,506.5 152.5,506.5 153.5,506.5 154.5,506.5 155.5,506.5 156.5,506.5 157.5,506.5 158.5,506.5 159.5,506.5 160.5,506.5 161.5,507.5 162.5,507.5 163.5,507.5 164.5,507.5 165.5,507.5 166.5,507.5 167.5,507.5 168.5,507.5 169.5,506.5 170.5,507.5 171.5,508.5 172.5,507.5 173.5,507.5 174.5,507.5 175.5,507.5 176.5,508.5 177.5,508.5 178.5,508.5 179.5,508.5 180.5,507.5 181.5,507.5 182.5,508.5 183.5,507.5 184.5,507.5 185.5,507.5 186.5,507.5 187.5,506.5 188.5,507.5 189.5,507.5 190.5,508.5 191.5,506.5 192.5,507.5 193.5,507.5 194.5,507.5 195.5,508.5 196.5,507.5 197.5,507.5 198.5,507.5 199.5,507.5 200.5,507.5 201.5,507.5 202.5,507.5 203.5,507.5 204.5,508.5 205.5,507.5 206.5,507.5 207.5,507.5 208.5,508.5 209.5,508.5 210.5,507.5 211.5,507.5 212.5,508.5 213.5,507.5 214.5,507.5 215.5,507.5 216.5,508.5 217.5,507.5 218.5,507.5 219.5,507.5 220.5,507.5 221.5,507.5 222.5,507.5 223.5,507.5 224.5,507.5 225.5,507.5 226.5,507.5 227.5,507.5 228.5,507.5 229.5,507.5 230.5,507.5 231.5,507.5 232.5,508.5 233.5,507.5 234.5,507.5 235.5,506.5 236.5,507.5 237.5,507.5 238.5,508.5 239.5,507.5 240.5,507.5 241.5,507.5 242.5,507.5 243.5,507.5 244.5,507.5 245.5,507.5 246.5,507.5 247.5,507.5 248.5,507.5 249.5,507.5 250.5,507.5 251.5,507.5 252.5,506.5 253.5,507.5 254.5,506.5 255.5,506.5 256.5,507.5 257.5,506.5 258.5,507.5 259.5,507.5 260.5,507.5 261.5,508.5 262.5,507.5 263.5,506.5 264.5,507.5 265.5,507.5 266.5,507.5 267.5,507.5 268.5,508.5 269.5,507.5 270.5,507.5 271.5,507.5 272.5,508.5 273.5,507.5 274.5,507.5 275.5,507.5 276.5,507.5 277.5,507.5 278.5,506.5 279.5,508.5 280.5,507.5 281.5,507.5 282.5,508.5 283.5,508.5 284.5,507.5 285.5,507.5 286.5,508.5 287.5,507.5 288.5,507.5 289.5,507.5 290.5,508.5 291.5,507.5 292.5,508.5 293.5,507.5 294.5,507.5 295.5,507.5 296.5,507.5 297.5,507.5 298.5,507.5 299.5,507.5 300.5,507.5 301.5,507.5 302.5,507.5 303.5,506.5 304.5,507.5 305.5,507.5 306.5,507.5 307.5,507.5 308.5,507.5 309.5,507.5 310.5,507.5 311.5,507.5 312.5,508.5 313.5,507.5 314.5,507.5 315.5,507.5 316.5,508.5 317.5,507.5 318.5,508.5 319.5,507.5 320.5,508.5 321.5,507.5 322.5,507.5 323.5,508.5 324.5,507.5 325.5,507.5 326.5,507.5 327.5,507.5 328.5,507.5 329.5,507.5 330.5,506.5 331.5,507.5 332.5,507.5 333.5,507.5 334.5,507.5 335.5,508.5 336.5,507.5 337.5,507.5 338.5,507.5 339.5,507.5 340.5,506.5 341.5,507.5 342.5,507.5 343.5,507.5 344.5,507.5 345.5,507.5 346.5,507.5 347.5,507.5 348.5,507.5 349.5,507.5 350.5,508.5 351.5,507.5 352.5,507.5 353.5,507.5 354.5,507.5 355.5,507.5 356.5,507.5 357.5,507.5 358.5,507.5 359.5,507.5 360.5,508.5 361.5,507.5 362.5,508.5 363.5,507.5 364.5,508.5 365.5,507.5 366.5,507.5 367.5,507.5 368.5,507.5 369.5,507.5 370.5,507.5 371.5,507.5 372.5,507.5 373.5,508.5 374.5,507.5 375.5,507.5 376.5,507.5 377.5,507.5 378.5,507.5 379.5,507.5 380.5,508.5 381.5,507.5 382.5,507.5 383.5,507.5 384.5,507.5 385.5,507.5 386.5,507.5 387.5,507.5 388.5,507.5 389.5,508.5 390.5,507.5 391.5,507.5 392.5,506.5 393.5,507.5 394.5,507.5 395.5,506.5 396.5,507.5 397.5,507.5 398.5,507.5 399.5,508.5 400.5,507.5 401.5,507.5 402.5,507.5 403.5,507.5 404.5,507.5 405.5,508.5 406.5,507.5 407.5,507.5 408.5,507.5 409.5,507.5 410.5,507.5 411.5,507.5 412.5,507.5 413.5,507.5 414.5,507.5 415.5,507.5 416.5,507.5 417.5,507.5 418.5,507.5 419.5,506.5 420.5,507.5 421.5,507.5 422.5,507.5 423.5,507.5 424.5,507.5 425.5,507.5 426.5,507.5 427.5,507.5 428.5,507.5 429.5,507.5 430.5,507.5 431.5,507.5 432.5,507.5 433.5,507.5 434.5,507.5 435.5,507.5 436.5,507.5 437.5,507.5 438.5,507.5 439.5,507.5 440.5,507.5 441.5,507.5 442.5,507.5 443.5,507.5 444.5,507.5 445.5,508.5 446.5,507.5 447.5,508.5 448.5,508.5 449.5,507.5 450.5,508.5 451.5,507.5 452.5,507.5 453.5,507.5 454.5,507.5 455.5,507.5 456.5,507.5 457.5,507.5 458.5,507.5 459.5,507.5 460.5,507.5 461.5,507.5 462.5,507.5 463.5,507.5 464.5,506.5 465.5,507.5 466.5,507.5 467.5,508.5 468.5,507.5 469.5,507.5 470.5,507.5 471.5,507.5 472.5,507.5 473.5,507.5 474.5,507.5 475.5,507.5 476.5,507.5 477.5,507.5 478.5,507.5 479.5,507.5 480.5,507.5 481.5,507.5 482.5,507.5 483.5,507.5 484.5,507.5 485.5,507.5 486.5,508.5 487.5,507.5 488.5,507.5 489.5,507.5 490.5,507.5 491.5,508.5 492.5,507.5 493.5,507.5 494.5,508.5 495.5,507.5 496.5,507.5 497.5,507.5 498.5,507.5 499.5,507.5 500.5,507.5 501.5,506.5 502.5,507.5 503.5,507.5 504.5,507.5 505.5,507.5 506.5,506.5 507.5,508.5 508.5,507.5 509.5,507.5 510.5,507.5 511.5,507.5 512.5,507.5 513.5,507.5 514.5,507.5 515.5,507.5 516.5,507.5 517.5,507.5 518.5,507.5 519.5,507.5 520.5,507.5 521.5,507.5 522.5,507.5 523.5,507.5 524.5,508.5 525.5,507.5 526.5,507.5 527.5,507.5 528.5,507.5 529.5,507.5 530.5,507.5 531.5,507.5 532.5,507.5 533.5,506.5 534.5,507.5 535.5,507.5 536.5,507.5 537.5,507.5 538.5,507.5 539.5,506.5 540.5,507.5 541.5,507.5 542.5,508.5 543.5,507.5 544.5,507.5 545.5,507.5 546.5,507.5 547.5,507.5 548.5,507.5 549.5,508.5 550.5,507.5 551.5,507.5 552.5,507.5 553.5,507.5 554.5,506.5 555.5,507.5 556.5,507.5 557.5,507.5 558.5,507.5 559.5,507.5 560.5,507.5 561.5,508.5 562.5,507.5 563.5,507.5 564.5,507.5 565.5,507.5 566.5,507.5 567.5,507.5 568.5,507.5 569.5,507.5 570.5,507.5 571.5,507.5 572.5,507.5 573.5,507.5 574.5,507.5 575.5,508.5 576.5,507.5 577.5,507.5 578.5,507.5 579.5,507.5 580.5,507.5 581.5,507.5 582.5,507.5 583.5,507.5 584.5,507.5 585.5,507.5 586.5,507.5 587.5,507.5 588.5,507.5 589.5,507.5 590.5,507.5 591.5,507.5 592.5,507.5 593.5,507.5 594.5,507.5 595.5,507.5 596.5,507.5 597.5,507.5 598.5,507.5 599.5,507.5 600.5,507.5 601.5,507.5 602.5,507.5 603.5,507.5 604.5,508.5 605.5,507.5 606.5,507.5 607.5,507.5 608.5,508.5 609.5,507.5 610.5,507.5 611.5,507.5 612.5,507.5 613.5,507.5 614.5,507.5 615.5,506.5 616.5,507.5 617.5,507.5 618.5,507.5 619.5,507.5 620.5,507.5 621.5,507.5 622.5,508.5 623.5,507.5 624.5,507.5 625.5,507.5 626.5,508.5 627.5,507.5 628.5,507.5 629.5,507.5 630.5,507.5 631.5,507.5 632.5,507.5 633.5,507.5 634.5,507.5 635.5,507.5 636.5,507.5 637.5,507.5 638.5,507.5 639.5,507.5 640.5,507.5 641.5,507.5 642.5,507.5 643.5,508.5 644.5,507.5 645.5,507.5 646.5,507.5 647.5,507.5 648.5,507.5 649.5,508.5 650.5,507.5 651.5,507.5 652.5,507.5 653.5,507.5 654.5,507.5 655.5,507.5 656.5,507.5 657.5,507.5 658.5,507.5 659.5,507.5 660.5,508.5 661.5,507.5 662.5,507.5 663.5,507.5 664.5,507.5 665.5,507.5 666.5,507.5 667.5,507.5 668.5,508.5 669.5,507.5 670.5,507.5 671.5,507.5 672.5,506.5 673.5,507.5 674.5,506.5 675.5,507.5 676.5,507.5 677.5,507.5 678.5,507.5 679.5,507.5 680.5,507.5 681.5,507.5 682.5,507.5 683.5,508.5 684.5,507.5 685.5,507.5 686.5,507.5 687.5,507.5 688.5,508.5 689.5,507.5 690.5,507.5 691.5,507.5 692.5,507.5 693.5,506.5 694.5,506.5 695.5,507.5 696.5,507.5 697.5,506.5 698.5,507.5 699.5,506.5 700.5,507.5 701.5,506.5 702.5,508.5 703.5,508.5 704.5,507.5 705.5,507.5 706.5,507.5 707.5,507.5 708.5,507.5 709.5,507.5 710.5,507.5 711.5,507.5 712.5,507.5 713.5,507.5 714.5,507.5 715.5,507.5 716.5,507.5 717.5,507.5 718.5,507.5 719.5,507.5 720.5,507.5 721.5,506.5 722.5,507.5 723.5,507.5 724.5,507.5 725.5,507.5 726.5,507.5 727.5,507.5 728.5,507.5 729.5,507.5 730.5,507.5 731.5,507.5 732.5,507.5 733.5,507.5 734.5,507.5 735.5,507.5 736.5,507.5 737.5,507.5 738.5,507.5 739.5,507.5 740.5,507.5 741.5,507.5 742.5,507.5 743.5,508.5 744.5,507.5 745.5,507.5 746.5,506.5 747.5,507.5 748.5,507.5 749.5,507.5 750.5,507.5 751.5,507.5 752.5,507.5 753.5,507.5 754.5,507.5 755.5,507.5 756.5,507.5 757.5,507.5 758.5,507.5 759.5,508.5 760.5,507.5 761.5,506.5 762.5,508.5 763.5,507.5 764.5,508.5 765.5,507.5 766.5,507.5 767.5,507.5 768.5,508.5 769.5,507.5 770.5,507.5 771.5,507.5 772.5,507.5 773.5,507.5 774.5,508.5 775.5,508.5 776.5,507.5 777.5,507.5 778.5,507.5 779.5,508.5 780.5,507.5 781.5,507.5 782.5,507.5 783.5,507.5 784.5,507.5 785.5,508.5 786.5,507.5 787.5,507.5 788.5,507.5 789.5,507.5 790.5,507.5 791.5,507.5 792.5,507.5 793.5,507.5 794.5,508.5 795.5,507.5 796.5,507.5 797.5,507.5 798.5,507.5 799.5,507.5 800.5,507.5 801.5,507.5 802.5,506.5 803.5,508.5 804.5,507.5 805.5,507.5 806.5,508.5 807.5,507.5 808.5,506.5 809.5,507.5 810.5,507.5 811.5,508.5 812.5,508.5 813.5,508.5 814.5,506.5 815.5,507.5 816.5,507.5 817.5,507.5 818.5,507.5 819.5,507.5 820.5,507.5 821.5,507.5 822.5,507.5 823.5,507.5 824.5,507.5 825.5,507.5 826.5,507.5 827.5,507.5 828.5,507.5 829.5,507.5 830.5,507.5 831.5,507.5 832.5,507.5 833.5,508.5 834.5,507.5 835.5,507.5 836.5,507.5 837.5,508.5 838.5,507.5 839.5,508.5 840.5,507.5 841.5,508.5 842.5,507.5 843.5,507.5 844.5,507.5 845.5,508.5 846.5,507.5 847.5,507.5 848.5,507.5 849.5,507.5 850.5,507.5 851.5,507.5 852.5,507.5 853.5,507.5 854.5,507.5 855.5,507.5 856.5,507.5 857.5,507.5 858.5,507.5 859.5,507.5 860.5,508.5 861.5,507.5 862.5,507.5 863.5,507.5 864.5,507.5 865.5,508.5 866.5,508.5 867.5,506.5 868.5,507.5 869.5,507.5 870.5,507.5 871.5,507.5 872.5,507.5 873.5,507.5 874.5,507.5 875.5,507.5 876.5,507.5 877.5,506.5 878.5,506.5 879.5,507.5 880.5,508.5 881.5,507.5 882.5,507.5 883.5,507.5 884.5,507.5 885.5,508.5 886.5,507.5 887.5,508.5 888.5,508.5 889.5,507.5 890.5,506.5 891.5,507.5 892.5,508.5 893.5,508.5 894.5,507.5 895.5,507.5 896.5,507.5 897.5,507.5 898.5,507.5 899.5,507.5 900.5,506.5 901.5,508.5 902.5,506.5 903.5,507.5 904.5,507.5 905.5,507.5 906.5,507.5 907.5,507.5 908.5,507.5 909.5,507.5 910.5,507.5 911.5,508.5 912.5,507.5 913.5,507.5 914.5,507.5 915.5,507.5 916.5,508.5 917.5,507.5 918.5,508.5 919.5,507.5 920.5,507.5 921.5,507.5 922.5,508.5 923.5,508.5 924.5,507.5 925.5,507.5 926.5,507.5 927.5,508.5 928.5,507.5 929.5,507.5 930.5,507.5 931.5,507.5 932.5,507.5 933.5,508.5 934.5,507.5 935.5,507.5 936.5,508.5 937.5,506.5 938.5,507.5 939.5,507.5 940.5,507.5 941.5,507.5 942.5,507.5 943.5,507.5 944.5,507.5 945.5,508.5 946.5,507.5 947.5,507.5 948.5,507.5 949.5,507.5 950.5,507.5 951.5,507.5 952.5,507.5 953.5,507.5 954.5,508.5 955.5,507.5 956.5,507.5 957.5,507.5 958.5,507.5 959.5,508.5 960.5,507.5 961.5,508.5 962.5,507.5 963.5,507.5 964.5,507.5 965.5,507.5 966.5,507.5 967.5,507.5 968.5,507.5 969.5,507.5 970.5,507.5 971.5,507.5 972.5,507.5 973.5,507.5 974.5,507.5 975.5,507.5 976.5,507.5 977.5,507.5 978.5,507.5 979.5,507.5 980.5,507.5 981.5,507.5 982.5,508.5 983.5,507.5 984.5,507.5 985.5,507.5 986.5,507.5 987.5,508.5 988.5,507.5" fill="none" stroke="#0000ff" stroke-width="1"/><rect x="38" y="451" width="953" height="2" fill="#000"/><rect x="38" y="528" width="953" height="2" fill="#000"/><rect x="38" y="451" width="2" height="79" fill="#000"/><rect x="989" y="451" width="2" height="79" fill="#000"/><text x="31" y="470" text-anchor="end" font-family="Liberation Sans" font-size="11" fill="#ff0000" stroke="#ff0000" stroke-width="0.25" shape-rendering="auto">10</text><text x="31" y="497" text-anchor="end" font-family="Liberation Sans" font-size="11" fill="#ff0000" stroke="#ff0000" stroke-width="0.25" shape-rendering="auto">5</text><text x="31" y="525" text-anchor="end" font-family="Liberation Sans" font-size="11" fill="#ff0000" stroke="#ff0000" stroke-width="0.25" shape-rendering="auto">0</text><path d="M31 517 L38 521.5 L31 526 Z" fill="#ff0000" shape-rendering="auto"/><path d="M990 473 L981 478.5 L990 484 Z" fill="#0000ff" shape-rendering="auto"/><text x="986" y="482" font-family="Liberation Sans" font-weight="bold" font-size="8" fill="#fff" shape-rendering="auto">B</text><text x="996" y="483" font-family="Liberation Sans" font-size="11" fill="#0000ff" shape-rendering="auto">0,5</text><path d="M990 507.5 L998 503 L998 512 Z" fill="#0000ff" shape-rendering="auto"/><text x="996" y="511" font-family="Liberation Sans" font-size="11" fill="#0000ff" shape-rendering="auto">0</text><text x="8" y="542" font-family="Liberation Sans" font-size="11" fill="#008000" shape-rendering="auto">Время, с</text><text x="101.2" y="544.6" font-family="Liberation Sans" font-size="12" fill="#000" shape-rendering="auto">0</text><rect x="40" y="543" width="15" height="15" fill="#d4d0c8"/><rect x="40" y="543" width="15" height="1" fill="#fff"/><rect x="40" y="543" width="1" height="15" fill="#fff"/><rect x="40" y="557" width="15" height="1" fill="#404040"/><rect x="54" y="543" width="1" height="15" fill="#404040"/><rect x="41" y="556" width="13" height="1" fill="#808080"/><rect x="53" y="544" width="1" height="13" fill="#808080"/><rect x="55" y="543" width="914" height="15" fill="#d4d0c8"/><rect x="55" y="543" width="914" height="1" fill="#fff"/><rect x="55" y="543" width="1" height="15" fill="#fff"/><rect x="55" y="557" width="914" height="1" fill="#404040"/><rect x="968" y="543" width="1" height="15" fill="#404040"/><rect x="56" y="556" width="912" height="1" fill="#808080"/><rect x="967" y="544" width="1" height="13" fill="#808080"/><rect x="969" y="543" width="16" height="15" fill="#d4d0c8"/><rect x="969" y="543" width="16" height="1" fill="#fff"/><rect x="969" y="543" width="1" height="15" fill="#fff"/><rect x="969" y="557" width="16" height="1" fill="#404040"/><rect x="984" y="543" width="1" height="15" fill="#404040"/><rect x="970" y="556" width="14" height="1" fill="#808080"/><rect x="983" y="544" width="1" height="13" fill="#808080"/><path d="M44 549.5 L48 546 L48 553 Z" fill="#000" shape-rendering="auto"/><path d="M979 549.5 L975 546 L975 553 Z" fill="#000" shape-rendering="auto"/><rect x="490.5" y="563.5" width="18" height="7" rx="3" fill="#f0efea" stroke="#8c8c88" shape-rendering="auto"/><path d="M496 565 L503 565 L499.5 568.5 Z" fill="#000" shape-rendering="auto"/></svg><svg style="position:absolute;left:0;top:0" width="1024" height="702" viewBox="0 0 1024 702"><defs>
<linearGradient id="knob" x1="0.15" y1="0.1" x2="0.85" y2="0.9"><stop offset="0" stop-color="#f2f2f2"/><stop offset="1" stop-color="#8c8c8c"/></linearGradient>
<linearGradient id="btn" x1="0" y1="0" x2="0" y2="1"><stop offset="0" stop-color="#fcfcfa"/><stop offset="0.8" stop-color="#e8e6e0"/><stop offset="1" stop-color="#d2cfc8"/></linearGradient>
<linearGradient id="btnb" x1="0" y1="0" x2="0" y2="1"><stop offset="0" stop-color="#e4eefa"/><stop offset="0.3" stop-color="#b4d0f2"/><stop offset="1" stop-color="#e8f0fa"/></linearGradient>
<linearGradient id="btnc" x1="0" y1="0" x2="0" y2="1"><stop offset="0" stop-color="#e8f0f8"/><stop offset="1" stop-color="#c8dcf0"/></linearGradient>
</defs><rect shape-rendering="crispEdges" x="6" y="578" width="727" height="100" fill="#d6d3cb"/><rect shape-rendering="crispEdges" x="9" y="584" width="3" height="1" fill="#1a1a1a"/><rect shape-rendering="crispEdges" x="9" y="586" width="3" height="1" fill="#1a1a1a"/><rect shape-rendering="crispEdges" x="9" y="588" width="3" height="1" fill="#1a1a1a"/><rect shape-rendering="crispEdges" x="9" y="590" width="3" height="1" fill="#1a1a1a"/><rect shape-rendering="crispEdges" x="9" y="592" width="3" height="1" fill="#1a1a1a"/><rect shape-rendering="crispEdges" x="9" y="594" width="3" height="1" fill="#1a1a1a"/><rect shape-rendering="crispEdges" x="9" y="596" width="3" height="1" fill="#1a1a1a"/><rect shape-rendering="crispEdges" x="9" y="598" width="3" height="1" fill="#1a1a1a"/><rect shape-rendering="crispEdges" x="9" y="600" width="3" height="1" fill="#1a1a1a"/><rect shape-rendering="crispEdges" x="9" y="602" width="3" height="1" fill="#1a1a1a"/><rect shape-rendering="crispEdges" x="9" y="604" width="3" height="1" fill="#1a1a1a"/><rect shape-rendering="crispEdges" x="9" y="606" width="3" height="1" fill="#1a1a1a"/><rect shape-rendering="crispEdges" x="9" y="608" width="3" height="1" fill="#1a1a1a"/><rect shape-rendering="crispEdges" x="9" y="610" width="3" height="1" fill="#1a1a1a"/><rect shape-rendering="crispEdges" x="9" y="612" width="3" height="1" fill="#1a1a1a"/><rect shape-rendering="crispEdges" x="9" y="614" width="3" height="1" fill="#1a1a1a"/><rect shape-rendering="crispEdges" x="9" y="616" width="3" height="1" fill="#1a1a1a"/><rect shape-rendering="crispEdges" x="9" y="618" width="3" height="1" fill="#1a1a1a"/><rect shape-rendering="crispEdges" x="9" y="620" width="3" height="1" fill="#1a1a1a"/><rect shape-rendering="crispEdges" x="9" y="622" width="3" height="1" fill="#1a1a1a"/><rect shape-rendering="crispEdges" x="9" y="624" width="3" height="1" fill="#1a1a1a"/><rect shape-rendering="crispEdges" x="9" y="626" width="3" height="1" fill="#1a1a1a"/><rect shape-rendering="crispEdges" x="9" y="628" width="3" height="1" fill="#1a1a1a"/><rect shape-rendering="crispEdges" x="9" y="630" width="3" height="1" fill="#1a1a1a"/><rect shape-rendering="crispEdges" x="9" y="632" width="3" height="1" fill="#1a1a1a"/><rect shape-rendering="crispEdges" x="9" y="634" width="3" height="1" fill="#1a1a1a"/><rect shape-rendering="crispEdges" x="9" y="636" width="3" height="1" fill="#1a1a1a"/><rect shape-rendering="crispEdges" x="9" y="638" width="3" height="1" fill="#1a1a1a"/><rect shape-rendering="crispEdges" x="9" y="640" width="3" height="1" fill="#1a1a1a"/><rect shape-rendering="crispEdges" x="9" y="642" width="3" height="1" fill="#1a1a1a"/><rect shape-rendering="crispEdges" x="9" y="644" width="3" height="1" fill="#1a1a1a"/><rect shape-rendering="crispEdges" x="9" y="646" width="3" height="1" fill="#1a1a1a"/><rect shape-rendering="crispEdges" x="9" y="648" width="3" height="1" fill="#1a1a1a"/><rect shape-rendering="crispEdges" x="9" y="650" width="3" height="1" fill="#1a1a1a"/><rect shape-rendering="crispEdges" x="9" y="652" width="3" height="1" fill="#1a1a1a"/><rect shape-rendering="crispEdges" x="9" y="654" width="3" height="1" fill="#1a1a1a"/><rect shape-rendering="crispEdges" x="9" y="656" width="3" height="1" fill="#1a1a1a"/><rect shape-rendering="crispEdges" x="9" y="658" width="3" height="1" fill="#1a1a1a"/><rect shape-rendering="crispEdges" x="9" y="660" width="3" height="1" fill="#1a1a1a"/><rect shape-rendering="crispEdges" x="9" y="662" width="3" height="1" fill="#1a1a1a"/><rect shape-rendering="crispEdges" x="9" y="664" width="3" height="1" fill="#1a1a1a"/><rect shape-rendering="crispEdges" x="9" y="666" width="3" height="1" fill="#1a1a1a"/><rect shape-rendering="crispEdges" x="9" y="668" width="3" height="1" fill="#1a1a1a"/><rect shape-rendering="crispEdges" x="9" y="670" width="3" height="1" fill="#1a1a1a"/><rect shape-rendering="crispEdges" x="9" y="672" width="3" height="1" fill="#1a1a1a"/><rect shape-rendering="crispEdges" x="19.5" y="589.5" width="93" height="85" fill="none" stroke="#e0ddd6"/><rect shape-rendering="crispEdges" x="18.5" y="588.5" width="95" height="87" fill="none" stroke="#8d8a84"/><rect shape-rendering="crispEdges" x="24.3" y="583" width="92" height="10" fill="#d4d0c8"/><text x="25.8" y="591.5" font-family="Liberation Sans" font-size="12" fill="#ff0000" font-weight="bold" text-anchor="start" textLength="89" lengthAdjust="spacingAndGlyphs" >Канал А (кВ/э)</text><rect shape-rendering="crispEdges" x="116.5" y="588.5" width="93" height="86" fill="none" stroke="#e0ddd6"/><rect shape-rendering="crispEdges" x="115.5" y="587.5" width="95" height="88" fill="none" stroke="#8d8a84"/><rect shape-rendering="crispEdges" x="122.5" y="582" width="84.4" height="10" fill="#d4d0c8"/><text x="124.0" y="592" font-family="Liberation Sans" font-size="12" fill="#0000ff" font-weight="bold" text-anchor="start" textLength="81.4" lengthAdjust="spacingAndGlyphs" >Канал B (B/э)</text><rect shape-rendering="crispEdges" x="213.5" y="588.5" width="104" height="86" fill="none" stroke="#e0ddd6"/><rect shape-rendering="crispEdges" x="212.5" y="587.5" width="106" height="88" fill="none" stroke="#8d8a84"/><rect shape-rendering="crispEdges" x="219.2" y="582" width="102" height="10" fill="#d4d0c8"/><text x="220.7" y="592" font-family="Liberation Sans" font-size="12" fill="#000" font-weight="bold" text-anchor="start" textLength="99" lengthAdjust="spacingAndGlyphs" >Окно просмотра</text><rect shape-rendering="crispEdges" x="323.5" y="588.5" width="133" height="43" fill="none" stroke="#e0ddd6"/><rect shape-rendering="crispEdges" x="322.5" y="587.5" width="135" height="45" fill="none" stroke="#8d8a84"/><rect shape-rendering="crispEdges" x="328.6" y="582" width="120.8" height="10" fill="#d4d0c8"/><text x="330.1" y="592" font-family="Liberation Sans" font-size="12" fill="#000" font-weight="bold" text-anchor="start" textLength="117.8" lengthAdjust="spacingAndGlyphs" >Обороты двигателя</text><rect shape-rendering="crispEdges" x="323.5" y="641.5" width="133" height="32" fill="none" stroke="#e0ddd6"/><rect shape-rendering="crispEdges" x="322.5" y="640.5" width="135" height="34" fill="none" stroke="#8d8a84"/><rect shape-rendering="crispEdges" x="328.6" y="635" width="94.6" height="10" fill="#d4d0c8"/><text x="330.1" y="644.5" font-family="Liberation Sans" font-size="12" fill="#000" font-weight="bold" text-anchor="start" textLength="91.6" lengthAdjust="spacingAndGlyphs" >Синхронизация</text><rect shape-rendering="crispEdges" x="461.5" y="613.5" width="268" height="18" fill="none" stroke="#e0ddd6"/><rect shape-rendering="crispEdges" x="460.5" y="612.5" width="270" height="20" fill="none" stroke="#8d8a84"/><rect shape-rendering="crispEdges" x="467.2" y="607" width="168" height="10" fill="#d4d0c8"/><text x="468.7" y="616" font-family="Liberation Sans" font-size="12" fill="#000" font-weight="bold" text-anchor="start" textLength="165" lengthAdjust="spacingAndGlyphs" >Параметры под маркерами</text><rect shape-rendering="crispEdges" x="461.5" y="642.5" width="268" height="32" fill="none" stroke="#e0ddd6"/><rect shape-rendering="crispEdges" x="460.5" y="641.5" width="270" height="34" fill="none" stroke="#8d8a84"/><rect shape-rendering="crispEdges" x="467.3" y="636" width="76" height="10" fill="#d4d0c8"/><text x="468.8" y="644.5" font-family="Liberation Sans" font-size="12" fill="#000" font-weight="bold" text-anchor="start" textLength="73" lengthAdjust="spacingAndGlyphs" >Управление</text><line x1="50.4" y1="641.4" x2="48.3" y2="643.5" stroke="#9a9a9a" stroke-width="1.2"/><line x1="46.5" y1="636.1" x2="43.8" y2="637.5" stroke="#9a9a9a" stroke-width="1.2"/><line x1="44.2" y1="629.9" x2="41.3" y2="630.5" stroke="#9a9a9a" stroke-width="1.2"/><line x1="43.9" y1="623.3" x2="40.9" y2="623.0" stroke="#9a9a9a" stroke-width="1.2"/><line x1="45.5" y1="616.9" x2="42.7" y2="615.7" stroke="#9a9a9a" stroke-width="1.2"/><line x1="48.9" y1="611.2" x2="46.6" y2="609.3" stroke="#9a9a9a" stroke-width="1.2"/><line x1="53.8" y1="606.8" x2="52.1" y2="604.3" stroke="#9a9a9a" stroke-width="1.2"/><line x1="59.8" y1="604.0" x2="58.9" y2="601.1" stroke="#9a9a9a" stroke-width="1.2"/><line x1="66.3" y1="603.0" x2="66.3" y2="600.0" stroke="#9a9a9a" stroke-width="1.2"/><line x1="72.8" y1="604.0" x2="73.7" y2="601.1" stroke="#9a9a9a" stroke-width="1.2"/><line x1="78.8" y1="606.8" x2="80.5" y2="604.3" stroke="#9a9a9a" stroke-width="1.2"/><line x1="83.7" y1="611.2" x2="86.0" y2="609.3" stroke="#9a9a9a" stroke-width="1.2"/><line x1="87.1" y1="616.9" x2="89.9" y2="615.7" stroke="#9a9a9a" stroke-width="1.2"/><line x1="88.7" y1="623.3" x2="91.7" y2="623.0" stroke="#9a9a9a" stroke-width="1.2"/><line x1="88.4" y1="629.9" x2="91.3" y2="630.5" stroke="#9a9a9a" stroke-width="1.2"/><line x1="86.1" y1="636.1" x2="88.8" y2="637.5" stroke="#9a9a9a" stroke-width="1.2"/><line x1="82.2" y1="641.4" x2="84.3" y2="643.5" stroke="#9a9a9a" stroke-width="1.2"/><circle cx="66.3" cy="625.5" r="19.3" fill="url(#knob)"/><circle cx="66.3" cy="625.5" r="12" fill="#d6d3cc"/><path d="M42 618.5 L47 621 M84 615 L89 612.5 M46 641.5 L50.5 639 M82.5 639 L87 642 M64.5 601 L65.5 605" stroke="#000" fill="none"/><text x="53.300000000000004" y="600.7" font-family="Liberation Sans" font-size="9" fill="#000" font-weight="normal" text-anchor="start" textLength="19.1" lengthAdjust="spacingAndGlyphs" stroke="#000" stroke-width="0.25" >10кВ</text><text x="25.0" y="616.8" font-family="Liberation Sans" font-size="9" fill="#000" font-weight="normal" text-anchor="start" textLength="15.799999999999999" lengthAdjust="spacingAndGlyphs" stroke="#000" stroke-width="0.25" >5кВ</text><text x="88.7" y="616.8" font-family="Liberation Sans" font-size="9" fill="#000" font-weight="normal" text-anchor="start" textLength="19.900000000000002" lengthAdjust="spacingAndGlyphs" stroke="#000" stroke-width="0.25" >15кВ</text><text x="31.099999999999998" y="645" font-family="Liberation Sans" font-size="9" fill="#000" font-weight="normal" text-anchor="start" textLength="14.7" lengthAdjust="spacingAndGlyphs" stroke="#000" stroke-width="0.25" >1кВ</text><text x="87.7" y="645" font-family="Liberation Sans" font-size="9" fill="#000" font-weight="normal" text-anchor="start" textLength="19.900000000000002" lengthAdjust="spacingAndGlyphs" stroke="#000" stroke-width="0.25" >20кВ</text><text x="58.400000000000006" y="628.4" font-family="Liberation Sans" font-size="9" fill="#ff0000" font-weight="normal" text-anchor="start" textLength="14.799999999999999" lengthAdjust="spacingAndGlyphs" stroke="#ff0000" stroke-width="0.25" >7кВ</text><path d="M52.0 613.5 L58.5 614 L55.5 619 Z" fill="#ff0000"/><line x1="148.8" y1="641.5" x2="146.7" y2="643.6" stroke="#9a9a9a" stroke-width="1.2"/><line x1="144.9" y1="636.2" x2="142.2" y2="637.6" stroke="#9a9a9a" stroke-width="1.2"/><line x1="142.6" y1="630.0" x2="139.7" y2="630.6" stroke="#9a9a9a" stroke-width="1.2"/><line x1="142.3" y1="623.4" x2="139.3" y2="623.1" stroke="#9a9a9a" stroke-width="1.2"/><line x1="143.9" y1="617.0" x2="141.1" y2="615.8" stroke="#9a9a9a" stroke-width="1.2"/><line x1="147.3" y1="611.3" x2="145.0" y2="609.4" stroke="#9a9a9a" stroke-width="1.2"/><line x1="152.2" y1="606.9" x2="150.5" y2="604.4" stroke="#9a9a9a" stroke-width="1.2"/><line x1="158.2" y1="604.1" x2="157.3" y2="601.2" stroke="#9a9a9a" stroke-width="1.2"/><line x1="164.7" y1="603.1" x2="164.7" y2="600.1" stroke="#9a9a9a" stroke-width="1.2"/><line x1="171.2" y1="604.1" x2="172.1" y2="601.2" stroke="#9a9a9a" stroke-width="1.2"/><line x1="177.2" y1="606.9" x2="178.9" y2="604.4" stroke="#9a9a9a" stroke-width="1.2"/><line x1="182.1" y1="611.3" x2="184.4" y2="609.4" stroke="#9a9a9a" stroke-width="1.2"/><line x1="185.5" y1="617.0" x2="188.3" y2="615.8" stroke="#9a9a9a" stroke-width="1.2"/><line x1="187.1" y1="623.4" x2="190.1" y2="623.1" stroke="#9a9a9a" stroke-width="1.2"/><line x1="186.8" y1="630.0" x2="189.7" y2="630.6" stroke="#9a9a9a" stroke-width="1.2"/><line x1="184.5" y1="636.2" x2="187.2" y2="637.6" stroke="#9a9a9a" stroke-width="1.2"/><line x1="180.6" y1="641.5" x2="182.7" y2="643.6" stroke="#9a9a9a" stroke-width="1.2"/><circle cx="164.7" cy="625.6" r="19.3" fill="url(#knob)"/><circle cx="164.7" cy="625.6" r="12" fill="#d6d3cc"/><path d="M140.5 618.5 L145.5 621 M182.5 615 L187.5 612.5 M144 641.5 L148.5 639 M181 639 L185.5 642 M163 601 L164 605" stroke="#000" fill="none"/><text x="160.1" y="600.8" font-family="Liberation Sans" font-size="9" fill="#000" font-weight="normal" text-anchor="start" textLength="10.4" lengthAdjust="spacingAndGlyphs" stroke="#000" stroke-width="0.25" >1B</text><text x="119.60000000000001" y="617" font-family="Liberation Sans" font-size="9" fill="#000" font-weight="normal" text-anchor="start" textLength="18.900000000000002" lengthAdjust="spacingAndGlyphs" stroke="#000" stroke-width="0.25" >0.5B</text><text x="187.5" y="617" font-family="Liberation Sans" font-size="9" fill="#000" font-weight="normal" text-anchor="start" textLength="18.200000000000003" lengthAdjust="spacingAndGlyphs" stroke="#000" stroke-width="0.25" >1.5B</text><text x="124.7" y="645.2" font-family="Liberation Sans" font-size="9" fill="#000" font-weight="normal" text-anchor="start" textLength="18.400000000000002" lengthAdjust="spacingAndGlyphs" stroke="#000" stroke-width="0.25" >0.1B</text><text x="184.89999999999998" y="645.2" font-family="Liberation Sans" font-size="9" fill="#000" font-weight="normal" text-anchor="start" textLength="11.7" lengthAdjust="spacingAndGlyphs" stroke="#000" stroke-width="0.25" >2B</text><text x="154.5" y="628.2" font-family="Liberation Sans" font-size="9" fill="#0000ff" font-weight="normal" text-anchor="start" textLength="19.400000000000002" lengthAdjust="spacingAndGlyphs" stroke="#0000ff" stroke-width="0.25" >0,7B</text><path d="M150.5 613.5 L157 614 L154 619 Z" fill="#0000ff"/><rect x="19.5" y="651.5" width="63" height="20" rx="3" fill="url(#btn)" stroke="#8d8c87"/><text x="23.4" y="665" font-family="Liberation Sans" font-size="11.5" fill="#ff0000" font-weight="normal" text-anchor="start" textLength="53" lengthAdjust="spacingAndGlyphs" >Выключен</text><rect x="85.5" y="653.5" width="25" height="15" rx="3" fill="url(#btn)" stroke="#8d8c87"/><rect shape-rendering="crispEdges" x="89" y="656" width="17" height="4" fill="#707070"/><rect shape-rendering="crispEdges" x="90" y="657" width="15" height="3" fill="#c0e0c0"/><rect shape-rendering="crispEdges" x="89" y="660" width="17" height="4" fill="#101010"/><rect shape-rendering="crispEdges" x="90" y="661" width="15" height="2" fill="#8a8a8a"/><path d="M97.5 658 L97.5 664 M95 660 L97.5 657 L100 660" stroke="#0000ff" stroke-width="1.3" fill="none"/><rect x="119" y="653" width="61" height="17" rx="3" fill="url(#btnb)" stroke="#747474" stroke-width="2"/><text x="127.6" y="665.7" font-family="Liberation Sans" font-size="11.5" fill="#000" font-weight="normal" text-anchor="start" textLength="45.4" lengthAdjust="spacingAndGlyphs" >Включен</text><rect x="184" y="655" width="23" height="13" rx="3" fill="url(#btnc)" stroke="#7a7a78" stroke-width="2"/><rect shape-rendering="crispEdges" x="187" y="657" width="17" height="4" fill="#101010"/><rect shape-rendering="crispEdges" x="188" y="658" width="15" height="2" fill="#8a8a8a"/><rect shape-rendering="crispEdges" x="187" y="661" width="17" height="4" fill="#707070"/><rect shape-rendering="crispEdges" x="188" y="661" width="15" height="3" fill="#c0e0c0"/><path d="M195.5 658 L195.5 664 M193 662 L195.5 665 L198 662" stroke="#0000ff" stroke-width="1.3" fill="none"/><text x="215.2" y="609" font-family="Liberation Sans" font-size="11" fill="#000" font-weight="normal" text-anchor="start" textLength="87" lengthAdjust="spacingAndGlyphs" stroke="#000" stroke-width="0.25" >Ширина окна, мс</text><rect shape-rendering="crispEdges" x="215" y="615" width="102" height="22" fill="#fff"/><rect shape-rendering="crispEdges" x="215" y="615" width="101" height="1" fill="#808080"/><rect shape-rendering="crispEdges" x="215" y="615" width="1" height="21" fill="#808080"/><rect shape-rendering="crispEdges" x="216" y="616" width="99" height="1" fill="#404040"/><rect shape-rendering="crispEdges" x="216" y="616" width="1" height="20" fill="#404040"/><rect shape-rendering="crispEdges" x="215" y="636" width="102" height="1" fill="#fff"/><text x="218.3" y="629" font-family="Liberation Sans" font-size="12" fill="#000" font-weight="bold" text-anchor="start" textLength="14.5" lengthAdjust="spacingAndGlyphs" >10</text><rect shape-rendering="crispEdges" x="299" y="617" width="15" height="8" fill="#d4d0c8"/><rect shape-rendering="crispEdges" x="299" y="625" width="15" height="8" fill="#d4d0c8"/><rect shape-rendering="crispEdges" x="299" y="632" width="15" height="1" fill="#404040"/><rect shape-rendering="crispEdges" x="313" y="617" width="1" height="16" fill="#404040"/><rect shape-rendering="crispEdges" x="299" y="624" width="15" height="1" fill="#808080"/><rect shape-rendering="crispEdges" x="299" y="617" width="14" height="1" fill="#fff"/><rect shape-rendering="crispEdges" x="299" y="617" width="1" height="15" fill="#fff"/><path d="M302.5 623 L310.5 623 L306.5 619 Z M302.5 626.5 L310.5 626.5 L306.5 630.5 Z" fill="#000"/><rect x="215.5" y="651.5" width="18" height="19" rx="3" fill="url(#btn)" stroke="#7c7b78"/><rect x="233.5" y="651.5" width="18" height="19" rx="3" fill="url(#btn)" stroke="#7c7b78"/><rect x="251.5" y="651.5" width="18" height="19" rx="3" fill="url(#btn)" stroke="#7c7b78"/><defs><radialGradient id="lens" cx="0.35" cy="0.3" r="0.8"><stop offset="0" stop-color="#ffffff"/><stop offset="1" stop-color="#9cc8f0"/></radialGradient><radialGradient id="lens2" cx="0.35" cy="0.3" r="0.8"><stop offset="0" stop-color="#ffffff"/><stop offset="1" stop-color="#b8b8c0"/></radialGradient><linearGradient id="pg" x1="0" y1="0" x2="1" y2="1"><stop offset="0" stop-color="#ffffff"/><stop offset="1" stop-color="#c8c8cc"/></linearGradient></defs><path d="M227 663 L232 668.5" stroke="#d89018" stroke-width="2.8"/><circle cx="222.8" cy="658.8" r="6" fill="url(#lens)" stroke="#7a70c8" stroke-width="1.1"/><path d="M219.5 658.8 L226 658.8 M222.8 655.5 L222.8 662" stroke="#0c3c8c" stroke-width="2.2"/><path d="M245 663 L250 668.5" stroke="#a0a0a8" stroke-width="2.6"/><circle cx="240.8" cy="658.8" r="6" fill="url(#lens2)" stroke="#606068" stroke-width="1.1"/><path d="M237.5 658.8 L244 658.8" stroke="#303038" stroke-width="2.2"/><path d="M254.5 653.5 L262.5 653.5 L266.5 657.5 L266.5 668.5 L254.5 668.5 Z" fill="url(#pg)" stroke="#a8a8b0"/><rect shape-rendering="crispEdges" x="272" y="653" width="43" height="16" fill="#fff"/><rect shape-rendering="crispEdges" x="303" y="655" width="11" height="12" fill="#d4d0c8"/><text x="275" y="664.4" font-family="Liberation Sans" font-size="10" fill="#000" font-weight="normal" text-anchor="start" textLength="12.5" lengthAdjust="spacingAndGlyphs" stroke="#000" stroke-width="0.25" >1:1</text><path d="M306 660 L311 660 L308.5 663 Z" fill="#000"/><rect shape-rendering="crispEdges" x="328" y="596" width="121" height="32" fill="#000"/><rect shape-rendering="crispEdges" x="329" y="597" width="119" height="30" fill="#000080"/><text x="390" y="621" font-family="Liberation Sans" font-size="25" fill="#ff0000" stroke="#ff0000" stroke-width="1.1" font-style="italic" textLength="55.5" lengthAdjust="spacingAndGlyphs">0897</text><rect x="325.5" y="651.5" width="30" height="19" rx="3" fill="url(#btn)" stroke="#8d8c87"/><text x="336.6" y="664" font-family="Liberation Sans" font-size="11" fill="#ff0000" font-weight="normal" text-anchor="start" textLength="6.6" lengthAdjust="spacingAndGlyphs" stroke="#ff0000" stroke-width="0.25" >А</text><rect x="358" y="652" width="28" height="18" rx="3" fill="url(#btnb)" stroke="#747474" stroke-width="2"/><text x="368.3" y="664.5" font-family="Liberation Sans" font-size="11" fill="#0000ff" font-weight="normal" text-anchor="start" textLength="6.4" lengthAdjust="spacingAndGlyphs" stroke="#0000ff" stroke-width="0.25" >B</text><text x="412" y="664.4" font-family="Liberation Sans" font-size="12" fill="#008000" font-weight="bold" text-anchor="start" textLength="26.5" lengthAdjust="spacingAndGlyphs" >Есть</text><text x="458.5" y="599.6" font-family="Liberation Sans" font-size="11" fill="#000" font-weight="normal" text-anchor="start" textLength="43.6" lengthAdjust="spacingAndGlyphs" stroke="#000" stroke-width="0.25" >Система</text><rect shape-rendering="crispEdges" x="509" y="587" width="115" height="18" fill="#fff"/><rect shape-rendering="crispEdges" x="612" y="588" width="11" height="16" fill="#d4d0c8"/><text x="511.8" y="599.6" font-family="Liberation Sans" font-size="12" fill="#000" font-weight="bold" text-anchor="start" textLength="42.6" lengthAdjust="spacingAndGlyphs" >1-3-4-2</text><path d="M614.5 595.5 L620.5 595.5 L617.5 598.5 Z" fill="#000"/><text x="626.2" y="599.6" font-family="Liberation Sans" font-size="11" fill="#000" font-weight="normal" text-anchor="start" textLength="56.5" lengthAdjust="spacingAndGlyphs" stroke="#000" stroke-width="0.25" >Синхрониз.</text><rect shape-rendering="crispEdges" x="689" y="587" width="39" height="18" fill="#fff"/><rect shape-rendering="crispEdges" x="716" y="588" width="11" height="16" fill="#d4d0c8"/><text x="692" y="599.6" font-family="Liberation Sans" font-size="12" fill="#000" font-weight="bold" text-anchor="start" >1</text><path d="M718.5 595.5 L724.5 595.5 L721.5 598.5 Z" fill="#000"/><text x="468.2" y="627.7" font-family="Liberation Sans" font-size="11" fill="#800080" font-weight="normal" text-anchor="start" textLength="49.3" lengthAdjust="spacingAndGlyphs" stroke="#800080" stroke-width="0.25" >T1 =-12,8</text><text x="548" y="627.7" font-family="Liberation Sans" font-size="11" fill="#008000" font-weight="normal" text-anchor="start" textLength="52" lengthAdjust="spacingAndGlyphs" stroke="#008000" stroke-width="0.25" >T2 =104,5</text><text x="619.6" y="627.7" font-family="Liberation Sans" font-size="11" fill="#008000" font-weight="normal" text-anchor="start" textLength="88.6" lengthAdjust="spacingAndGlyphs" stroke="#008000" stroke-width="0.25" >T2 - <tspan fill="#800080">T1</tspan> =117,3 мс</text><rect x="494.5" y="648.5" width="87" height="24" rx="3" fill="url(#btn)" stroke="#8d8c87"/><rect x="614.5" y="648.5" width="87" height="24" rx="3" fill="url(#btn)" stroke="#8d8c87"/><path d="M502.5 651.5 L510.5 658.5 L502.5 665.5 Z M509.5 651.5 L517.5 658.5 L509.5 665.5 Z" fill="#3ee03e" stroke="#129a12" stroke-width="1.2"/><path d="M630.7 651.5 L638.7 658.5 L630.7 665.5 Z M637.7 651.5 L645.7 658.5 L637.7 665.5 Z" fill="#3ee03e" stroke="#129a12" stroke-width="1.2"/><text x="521.8" y="664.6" font-family="Liberation Sans" font-size="12" fill="#008000" font-weight="bold" text-anchor="start" textLength="49" lengthAdjust="spacingAndGlyphs" >Однокр.</text><text x="650" y="664.6" font-family="Liberation Sans" font-size="12" fill="#008000" font-weight="bold" text-anchor="start" textLength="32.5" lengthAdjust="spacingAndGlyphs" >Цикл.</text></svg><svg style="position:absolute;left:0;top:0" width="1024" height="702" font-family="Liberation Sans"><text x="412.5" y="20" font-size="11" fill="#000" font-weight="normal" text-anchor="start" textLength="49.4" lengthAdjust="spacing" stroke="#000" stroke-width="0.25" >Рамка ДД</text><text x="481" y="20" font-size="11" fill="#000" font-weight="normal" text-anchor="start" textLength="77" lengthAdjust="spacing" stroke="#000" stroke-width="0.25" >Параметры ДД</text><text x="579.4" y="20" font-size="11" fill="#000" font-weight="normal" text-anchor="start" textLength="47.6" lengthAdjust="spacing" stroke="#000" stroke-width="0.25" >Рамка ДР</text><text x="7.9" y="46" font-size="11" fill="#000" font-weight="normal" text-anchor="start" textLength="68.2" lengthAdjust="spacing" stroke="#000" stroke-width="0.25" >Осциллограф</text><text x="87.6" y="46" font-size="11" fill="#000" font-weight="normal" text-anchor="start" textLength="54.4" lengthAdjust="spacing" stroke="#000" stroke-width="0.25" >Самописец</text><text x="236" y="46" font-size="11" fill="#000" font-weight="normal" text-anchor="start" textLength="64.6" lengthAdjust="spacing" stroke="#000" stroke-width="0.25" >Скан-Тестер</text><text x="313" y="46" font-size="11" fill="#000" font-weight="normal" text-anchor="start" textLength="62" lengthAdjust="spacing" stroke="#000" stroke-width="0.25" >Тест-мастер</text><text x="386.5" y="46" font-size="11" fill="#000" font-weight="normal" text-anchor="start" textLength="107.5" lengthAdjust="spacing" stroke="#000" stroke-width="0.25" >www.motor-master.ru</text><text x="154" y="44" font-size="11" fill="#000" font-weight="normal" text-anchor="start" textLength="71" lengthAdjust="spacing" stroke="#000" stroke-width="0.25" >Мотор-тестер</text></svg>
</body></html>
